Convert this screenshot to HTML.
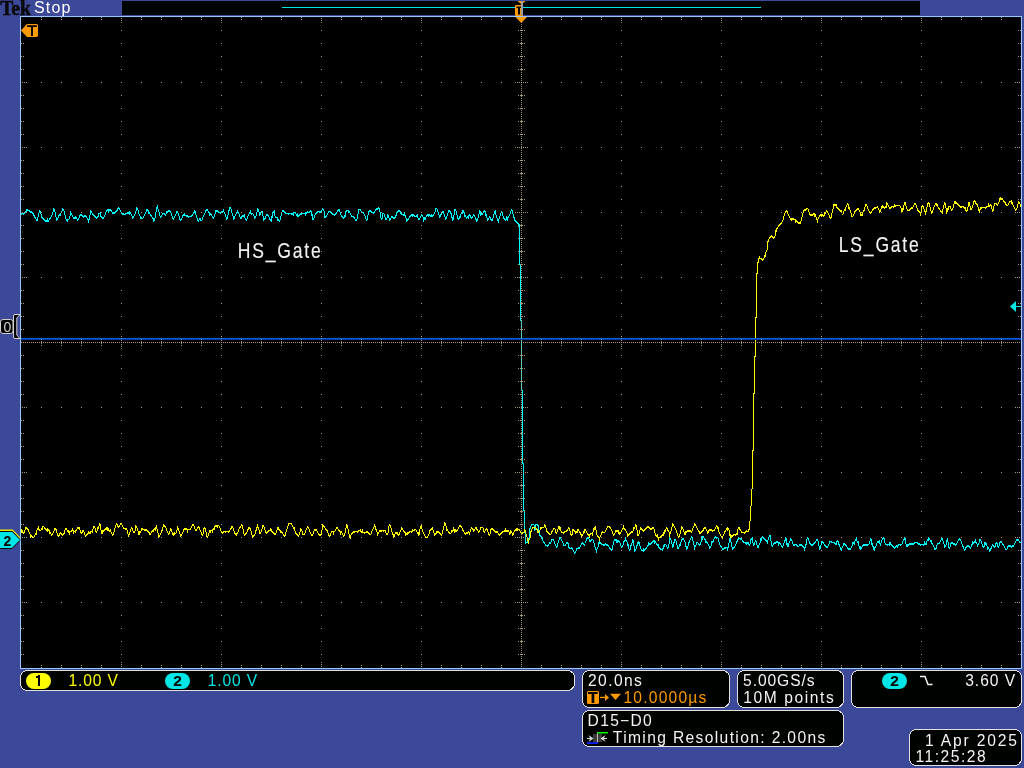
<!DOCTYPE html>
<html><head><meta charset="utf-8"><style>
html,body{margin:0;padding:0;background:#3c4898;width:1024px;height:768px;overflow:hidden}
svg{position:absolute;left:0;top:0;display:block;will-change:transform}
text{font-family:"Liberation Sans",sans-serif}
</style></head><body>
<svg width="1024" height="768" viewBox="0 0 1024 768">
<rect x="0" y="0" width="1024" height="768" fill="#3c4898"/>
<text x="0" y="0" transform="translate(0.16 14.8) scale(1 1.07)" font-weight="bold" font-size="19.5" fill="#0a0a0a" stroke="#0a0a0a" stroke-width="0.5" style="font-family:'Liberation Serif',serif">Tek</text>
<text x="34.0" y="13" font-size="16" fill="#ffffff" letter-spacing="1.141">Stop</text>
<rect x="122" y="1" width="798" height="14" fill="#000400"/>
<rect x="282" y="7" width="479" height="1" fill="#00e6e6"/>
<rect x="20.5" y="16.5" width="1001" height="652" fill="#000" stroke="#96c8ff" stroke-width="1"/>
<path d="M21 213h1v2h-1zM22 213h1v1h-1zM23 213h1v2h-1zM24 212h1v2h-1zM25 211h1v2h-1zM26 209h1v3h-1zM27 209h1v2h-1zM28 210h1v1h-1zM29 210h1v2h-1zM30 211h1v2h-1zM31 211h1v2h-1zM32 212h1v2h-1zM33 213h1v3h-1zM34 215h1v3h-1zM35 217h1v2h-1zM36 219h1v2h-1zM37 217h1v4h-1zM38 213h1v4h-1zM39 210h1v3h-1zM40 211h1v3h-1zM41 214h1v4h-1zM42 217h1v2h-1zM43 218h1v2h-1zM44 219h1v2h-1zM45 220h1v2h-1zM46 220h1v2h-1zM47 218h1v4h-1zM48 220h1v2h-1zM49 218h1v2h-1zM50 217h1v2h-1zM51 215h1v2h-1zM52 212h1v3h-1zM53 208h1v4h-1zM54 209h1v3h-1zM55 212h1v5h-1zM56 217h1v4h-1zM57 218h1v2h-1zM58 215h1v3h-1zM59 214h1v2h-1zM60 213h1v3h-1zM61 211h1v2h-1zM62 208h1v3h-1zM63 209h1v2h-1zM64 211h1v4h-1zM65 215h1v4h-1zM66 219h1v2h-1zM67 219h1v3h-1zM68 219h1v1h-1zM69 216h1v3h-1zM70 211h1v5h-1zM71 213h1v2h-1zM72 215h1v2h-1zM73 217h1v2h-1zM74 217h1v2h-1zM75 216h1v3h-1zM76 217h1v2h-1zM77 219h1v2h-1zM78 218h1v2h-1zM79 215h1v3h-1zM80 214h1v2h-1zM81 214h1v2h-1zM82 215h1v2h-1zM83 216h1v2h-1zM84 215h1v2h-1zM85 215h1v2h-1zM86 216h1v2h-1zM87 218h1v2h-1zM88 219h1v4h-1zM89 215h1v5h-1zM90 210h1v5h-1zM91 211h1v2h-1zM92 213h1v2h-1zM93 214h1v2h-1zM94 215h1v2h-1zM95 216h1v2h-1zM96 217h1v2h-1zM97 216h1v2h-1zM98 213h1v4h-1zM99 213h1v1h-1zM100 212h1v5h-1zM101 216h1v2h-1zM102 217h1v2h-1zM103 217h1v2h-1zM104 215h1v2h-1zM105 212h1v3h-1zM106 210h1v2h-1zM107 209h1v2h-1zM108 209h1v4h-1zM109 209h1v2h-1zM110 209h1v2h-1zM111 210h1v2h-1zM112 212h1v2h-1zM113 212h1v2h-1zM114 212h1v2h-1zM115 211h1v2h-1zM116 210h1v2h-1zM117 208h1v3h-1zM118 207h1v2h-1zM119 208h1v2h-1zM120 210h1v2h-1zM121 212h1v2h-1zM122 213h1v2h-1zM123 213h1v2h-1zM124 214h1v1h-1zM125 213h1v2h-1zM126 213h1v1h-1zM127 212h1v2h-1zM128 212h1v2h-1zM129 211h1v4h-1zM130 212h1v2h-1zM131 214h1v2h-1zM132 216h1v3h-1zM133 216h1v2h-1zM134 214h1v2h-1zM135 211h1v3h-1zM136 207h1v4h-1zM137 208h1v2h-1zM138 210h1v4h-1zM139 214h1v2h-1zM140 216h1v3h-1zM141 217h1v2h-1zM142 218h1v1h-1zM143 216h1v2h-1zM144 214h1v2h-1zM145 212h1v2h-1zM146 209h1v3h-1zM147 209h1v2h-1zM148 210h1v4h-1zM149 212h1v2h-1zM150 214h1v2h-1zM151 215h1v2h-1zM152 217h1v2h-1zM153 218h1v4h-1zM154 218h1v3h-1zM155 212h1v6h-1zM156 207h1v5h-1zM157 205h1v4h-1zM158 209h1v3h-1zM159 212h1v4h-1zM160 216h1v2h-1zM161 215h1v2h-1zM162 213h1v2h-1zM163 213h1v1h-1zM164 213h1v2h-1zM165 214h1v2h-1zM166 211h1v3h-1zM167 211h1v2h-1zM168 210h1v2h-1zM169 210h1v2h-1zM170 211h1v2h-1zM171 213h1v3h-1zM172 216h1v3h-1zM173 218h1v2h-1zM174 216h1v2h-1zM175 214h1v2h-1zM176 211h1v3h-1zM177 211h1v2h-1zM178 213h1v3h-1zM179 216h1v4h-1zM180 219h1v2h-1zM181 218h1v2h-1zM182 215h1v3h-1zM183 214h1v2h-1zM184 213h1v3h-1zM185 215h1v1h-1zM186 215h1v2h-1zM187 215h1v2h-1zM188 216h1v2h-1zM189 216h1v1h-1zM190 216h1v1h-1zM191 215h1v2h-1zM192 214h1v2h-1zM193 212h1v2h-1zM194 210h1v3h-1zM195 211h1v4h-1zM196 215h1v3h-1zM197 218h1v3h-1zM198 220h1v2h-1zM199 218h1v2h-1zM200 218h1v3h-1zM201 220h1v1h-1zM202 217h1v3h-1zM203 215h1v2h-1zM204 213h1v2h-1zM205 210h1v3h-1zM206 209h1v2h-1zM207 209h1v2h-1zM208 211h1v2h-1zM209 212h1v4h-1zM210 213h1v2h-1zM211 214h1v2h-1zM212 216h1v2h-1zM213 217h1v2h-1zM214 214h1v3h-1zM215 210h1v4h-1zM216 210h1v2h-1zM217 210h1v2h-1zM218 211h1v2h-1zM219 212h1v1h-1zM220 212h1v2h-1zM221 211h1v2h-1zM222 211h1v2h-1zM223 209h1v3h-1zM224 212h1v2h-1zM225 214h1v3h-1zM226 217h1v3h-1zM227 215h1v4h-1zM228 210h1v5h-1zM229 207h1v4h-1zM230 207h1v2h-1zM231 209h1v4h-1zM232 213h1v3h-1zM233 216h1v4h-1zM234 216h1v3h-1zM235 214h1v2h-1zM236 212h1v2h-1zM237 210h1v3h-1zM238 212h1v2h-1zM239 214h1v3h-1zM240 217h1v2h-1zM241 216h1v3h-1zM242 215h1v2h-1zM243 215h1v2h-1zM244 214h1v4h-1zM245 218h1v2h-1zM246 219h1v2h-1zM247 216h1v3h-1zM248 214h1v2h-1zM249 212h1v2h-1zM250 210h1v4h-1zM251 213h1v2h-1zM252 213h1v1h-1zM253 214h1v2h-1zM254 216h1v3h-1zM255 216h1v2h-1zM256 212h1v4h-1zM257 208h1v4h-1zM258 209h1v3h-1zM259 212h1v4h-1zM260 212h1v3h-1zM261 211h1v2h-1zM262 211h1v5h-1zM263 216h1v5h-1zM264 218h1v2h-1zM265 216h1v3h-1zM266 214h1v2h-1zM267 214h1v2h-1zM268 215h1v2h-1zM269 217h1v3h-1zM270 219h1v2h-1zM271 216h1v6h-1zM272 212h1v6h-1zM273 211h1v2h-1zM274 210h1v6h-1zM275 216h1v2h-1zM276 217h1v1h-1zM277 217h1v4h-1zM278 219h1v2h-1zM279 220h1v2h-1zM280 216h1v4h-1zM281 212h1v4h-1zM282 210h1v2h-1zM283 210h1v2h-1zM284 211h1v2h-1zM285 212h1v2h-1zM286 213h1v1h-1zM287 213h1v1h-1zM288 213h1v2h-1zM289 213h1v1h-1zM290 213h1v1h-1zM291 213h1v2h-1zM292 213h1v2h-1zM293 212h1v4h-1zM294 212h1v1h-1zM295 212h1v2h-1zM296 214h1v2h-1zM297 213h1v4h-1zM298 215h1v2h-1zM299 214h1v2h-1zM300 213h1v2h-1zM301 213h1v2h-1zM302 213h1v1h-1zM303 213h1v1h-1zM304 213h1v1h-1zM305 212h1v4h-1zM306 212h1v2h-1zM307 211h1v2h-1zM308 212h1v1h-1zM309 211h1v2h-1zM310 210h1v2h-1zM311 211h1v5h-1zM312 214h1v6h-1zM313 218h1v2h-1zM314 215h1v3h-1zM315 213h1v2h-1zM316 212h1v2h-1zM317 211h1v2h-1zM318 211h1v1h-1zM319 211h1v2h-1zM320 211h1v2h-1zM321 210h1v2h-1zM322 208h1v2h-1zM323 209h1v2h-1zM324 211h1v7h-1zM325 216h1v2h-1zM326 215h1v2h-1zM327 213h1v2h-1zM328 211h1v2h-1zM329 211h1v1h-1zM330 211h1v2h-1zM331 212h1v2h-1zM332 213h1v2h-1zM333 214h1v1h-1zM334 214h1v2h-1zM335 213h1v2h-1zM336 212h1v2h-1zM337 210h1v2h-1zM338 209h1v2h-1zM339 209h1v3h-1zM340 212h1v3h-1zM341 215h1v2h-1zM342 216h1v2h-1zM343 217h1v2h-1zM344 215h1v3h-1zM345 211h1v6h-1zM346 210h1v2h-1zM347 210h1v1h-1zM348 210h1v3h-1zM349 211h1v2h-1zM350 213h1v2h-1zM351 215h1v2h-1zM352 216h1v1h-1zM353 216h1v2h-1zM354 217h1v2h-1zM355 219h1v2h-1zM356 219h1v2h-1zM357 214h1v5h-1zM358 209h1v5h-1zM359 209h1v1h-1zM360 209h1v2h-1zM361 211h1v2h-1zM362 212h1v1h-1zM363 212h1v2h-1zM364 214h1v2h-1zM365 216h1v3h-1zM366 219h1v2h-1zM367 215h1v5h-1zM368 211h1v4h-1zM369 210h1v2h-1zM370 210h1v2h-1zM371 211h1v2h-1zM372 212h1v1h-1zM373 212h1v2h-1zM374 211h1v2h-1zM375 209h1v2h-1zM376 208h1v2h-1zM377 208h1v2h-1zM378 207h1v2h-1zM379 208h1v4h-1zM380 212h1v6h-1zM381 218h1v2h-1zM382 213h1v6h-1zM383 213h1v1h-1zM384 214h1v3h-1zM385 217h1v3h-1zM386 218h1v2h-1zM387 214h1v4h-1zM388 215h1v3h-1zM389 218h1v3h-1zM390 218h1v2h-1zM391 216h1v2h-1zM392 216h1v2h-1zM393 217h1v2h-1zM394 217h1v2h-1zM395 215h1v3h-1zM396 212h1v4h-1zM397 211h1v2h-1zM398 210h1v2h-1zM399 210h1v2h-1zM400 211h1v3h-1zM401 213h1v2h-1zM402 214h1v1h-1zM403 214h1v2h-1zM404 212h1v4h-1zM405 215h1v3h-1zM406 218h1v4h-1zM407 219h1v2h-1zM408 218h1v2h-1zM409 216h1v2h-1zM410 215h1v2h-1zM411 214h1v2h-1zM412 214h1v3h-1zM413 214h1v2h-1zM414 215h1v2h-1zM415 216h1v1h-1zM416 215h1v2h-1zM417 214h1v4h-1zM418 218h1v2h-1zM419 218h1v2h-1zM420 216h1v2h-1zM421 214h1v2h-1zM422 215h1v2h-1zM423 217h1v5h-1zM424 217h1v3h-1zM425 217h1v3h-1zM426 215h1v2h-1zM427 214h1v2h-1zM428 214h1v3h-1zM429 214h1v2h-1zM430 215h1v2h-1zM431 214h1v3h-1zM432 215h1v2h-1zM433 214h1v2h-1zM434 212h1v2h-1zM435 208h1v4h-1zM436 208h1v1h-1zM437 209h1v3h-1zM438 212h1v3h-1zM439 215h1v3h-1zM440 214h1v3h-1zM441 213h1v2h-1zM442 211h1v2h-1zM443 211h1v3h-1zM444 214h1v3h-1zM445 217h1v3h-1zM446 216h1v3h-1zM447 213h1v3h-1zM448 210h1v3h-1zM449 210h1v2h-1zM450 211h1v3h-1zM451 213h1v5h-1zM452 217h1v4h-1zM453 215h1v5h-1zM454 209h1v6h-1zM455 209h1v2h-1zM456 211h1v4h-1zM457 215h1v4h-1zM458 218h1v2h-1zM459 216h1v3h-1zM460 214h1v4h-1zM461 212h1v2h-1zM462 210h1v4h-1zM463 210h1v3h-1zM464 212h1v5h-1zM465 215h1v2h-1zM466 217h1v2h-1zM467 216h1v2h-1zM468 215h1v4h-1zM469 214h1v2h-1zM470 215h1v3h-1zM471 217h1v2h-1zM472 216h1v2h-1zM473 214h1v2h-1zM474 215h1v2h-1zM475 217h1v3h-1zM476 219h1v3h-1zM477 218h1v3h-1zM478 214h1v4h-1zM479 210h1v4h-1zM480 211h1v5h-1zM481 213h1v2h-1zM482 213h1v2h-1zM483 211h1v2h-1zM484 210h1v2h-1zM485 211h1v5h-1zM486 214h1v4h-1zM487 218h1v3h-1zM488 218h1v2h-1zM489 216h1v2h-1zM490 217h1v3h-1zM491 219h1v2h-1zM492 218h1v3h-1zM493 214h1v4h-1zM494 211h1v3h-1zM495 210h1v5h-1zM496 215h1v3h-1zM497 218h1v3h-1zM498 219h1v4h-1zM499 216h1v3h-1zM500 213h1v3h-1zM501 211h1v2h-1zM502 212h1v4h-1zM503 216h1v3h-1zM504 218h1v2h-1zM505 219h1v2h-1zM506 216h1v4h-1zM507 217h1v4h-1zM508 216h1v2h-1zM509 214h1v2h-1zM510 211h1v3h-1zM511 209h1v2h-1zM512 210h1v3h-1zM512 212h1v2h-1zM513 214h1v4h-1zM514 217h1v4h-1zM515 220h1v2h-1zM516 221h1v2h-1zM517 222h1v2h-1zM518 223h1v4h-1zM519 227h1v4h-1zM519 224h1v41h-1zM520 264h1v57h-1zM521 321h1v70h-1zM522 390h1v74h-1zM523 463h1v48h-1zM524 510h1v23h-1zM525 532h1v12h-1zM526 542h1v1h-1zM527 540h1v3h-1zM528 538h1v4h-1zM529 528h1v12h-1zM530 526h1v3h-1zM531 524h1v2h-1zM532 524h1v1h-1zM533 524h1v1h-1zM534 525h1v6h-1zM535 524h1v6h-1zM536 524h1v1h-1zM537 524h1v2h-1zM538 525h1v6h-1zM539 531h1v5h-1zM540 535h1v2h-1zM541 536h1v3h-1zM542 537h1v4h-1zM543 541h1v2h-1zM544 542h1v2h-1zM545 544h1v2h-1zM546 545h1v1h-1zM547 545h1v2h-1zM548 544h1v2h-1zM549 542h1v2h-1zM550 542h1v2h-1zM551 539h1v3h-1zM552 539h1v1h-1zM553 539h1v2h-1zM554 541h1v3h-1zM555 544h1v2h-1zM556 546h1v2h-1zM557 543h1v4h-1zM558 540h1v3h-1zM559 537h1v3h-1zM560 537h1v2h-1zM561 539h1v2h-1zM562 541h1v2h-1zM563 543h1v3h-1zM564 545h1v1h-1zM565 544h1v2h-1zM566 542h1v2h-1zM567 542h1v2h-1zM568 543h1v5h-1zM569 547h1v2h-1zM570 548h1v1h-1zM571 547h1v2h-1zM572 548h1v2h-1zM573 550h1v2h-1zM574 552h1v2h-1zM575 551h1v2h-1zM576 548h1v3h-1zM577 548h1v1h-1zM578 547h1v2h-1zM579 547h1v2h-1zM580 545h1v2h-1zM581 543h1v2h-1zM582 542h1v2h-1zM583 543h1v2h-1zM584 544h1v2h-1zM585 541h1v2h-1zM586 538h1v3h-1zM587 537h1v2h-1zM588 537h1v2h-1zM589 539h1v3h-1zM590 540h1v2h-1zM591 539h1v2h-1zM592 539h1v1h-1zM593 540h1v3h-1zM594 543h1v4h-1zM595 547h1v3h-1zM596 549h1v4h-1zM597 547h1v2h-1zM598 542h1v5h-1zM599 540h1v4h-1zM600 542h1v2h-1zM601 543h1v2h-1zM602 544h1v1h-1zM603 544h1v2h-1zM604 544h1v2h-1zM605 543h1v2h-1zM606 544h1v2h-1zM607 544h1v2h-1zM608 545h1v2h-1zM609 547h1v2h-1zM610 548h1v2h-1zM611 549h1v2h-1zM612 545h1v5h-1zM613 541h1v4h-1zM614 539h1v2h-1zM615 539h1v2h-1zM616 539h1v4h-1zM617 540h1v3h-1zM618 540h1v2h-1zM619 541h1v2h-1zM620 543h1v3h-1zM621 546h1v2h-1zM622 545h1v2h-1zM623 541h1v4h-1zM624 540h1v2h-1zM625 537h1v4h-1zM626 540h1v2h-1zM627 542h1v4h-1zM628 544h1v5h-1zM629 549h1v2h-1zM630 545h1v5h-1zM631 543h1v3h-1zM632 539h1v4h-1zM633 540h1v6h-1zM634 546h1v6h-1zM635 549h1v2h-1zM636 545h1v4h-1zM637 542h1v4h-1zM638 541h1v3h-1zM639 542h1v4h-1zM640 546h1v3h-1zM641 549h1v2h-1zM642 550h1v1h-1zM643 548h1v4h-1zM644 549h1v2h-1zM645 548h1v2h-1zM646 547h1v2h-1zM647 545h1v2h-1zM648 542h1v4h-1zM649 543h1v2h-1zM650 543h1v2h-1zM651 542h1v2h-1zM652 541h1v2h-1zM653 540h1v2h-1zM654 540h1v4h-1zM655 541h1v2h-1zM656 543h1v2h-1zM657 544h1v2h-1zM658 544h1v4h-1zM659 547h1v2h-1zM660 548h1v2h-1zM661 549h1v1h-1zM662 548h1v3h-1zM663 545h1v4h-1zM664 544h1v3h-1zM665 544h1v1h-1zM666 545h1v2h-1zM667 547h1v2h-1zM668 544h1v4h-1zM669 537h1v7h-1zM670 538h1v2h-1zM671 540h1v4h-1zM672 544h1v4h-1zM673 542h1v5h-1zM674 539h1v4h-1zM675 539h1v2h-1zM676 541h1v4h-1zM677 545h1v4h-1zM678 547h1v2h-1zM679 544h1v3h-1zM680 542h1v4h-1zM681 539h1v3h-1zM682 538h1v2h-1zM683 538h1v2h-1zM684 540h1v2h-1zM685 542h1v5h-1zM686 546h1v4h-1zM687 546h1v3h-1zM688 542h1v4h-1zM689 540h1v3h-1zM690 538h1v2h-1zM691 536h1v2h-1zM692 537h1v4h-1zM693 541h1v4h-1zM694 545h1v5h-1zM695 545h1v2h-1zM696 542h1v3h-1zM697 542h1v1h-1zM698 543h1v2h-1zM699 544h1v2h-1zM700 542h1v3h-1zM701 536h1v6h-1zM702 536h1v4h-1zM703 536h1v2h-1zM704 538h1v2h-1zM705 539h1v4h-1zM706 541h1v2h-1zM707 542h1v2h-1zM708 544h1v2h-1zM709 546h1v3h-1zM710 546h1v2h-1zM711 541h1v5h-1zM712 541h1v2h-1zM713 539h1v3h-1zM714 537h1v2h-1zM715 536h1v2h-1zM716 537h1v2h-1zM717 537h1v1h-1zM718 538h1v4h-1zM719 542h1v3h-1zM720 545h1v2h-1zM721 546h1v2h-1zM722 548h1v2h-1zM723 548h1v2h-1zM724 547h1v2h-1zM725 547h1v2h-1zM726 547h1v1h-1zM727 547h1v4h-1zM728 543h1v5h-1zM729 538h1v5h-1zM730 537h1v5h-1zM731 542h1v5h-1zM732 547h1v3h-1zM733 547h1v2h-1zM734 546h1v2h-1zM735 544h1v2h-1zM736 541h1v3h-1zM737 539h1v3h-1zM738 537h1v3h-1zM739 538h1v1h-1zM740 538h1v2h-1zM741 538h1v2h-1zM742 540h1v2h-1zM743 541h1v2h-1zM744 542h1v1h-1zM745 542h1v2h-1zM746 542h1v3h-1zM747 542h1v2h-1zM748 542h1v3h-1zM749 544h1v2h-1zM750 539h1v5h-1zM751 538h1v2h-1zM752 537h1v6h-1zM753 543h1v3h-1zM754 542h1v3h-1zM755 540h1v2h-1zM756 541h1v4h-1zM757 545h1v3h-1zM758 545h1v3h-1zM759 543h1v2h-1zM760 538h1v5h-1zM761 538h1v3h-1zM762 536h1v2h-1zM763 537h1v2h-1zM764 538h1v2h-1zM765 539h1v2h-1zM766 540h1v2h-1zM767 540h1v4h-1zM768 537h1v3h-1zM769 535h1v2h-1zM770 535h1v6h-1zM771 541h1v5h-1zM772 545h1v2h-1zM773 543h1v2h-1zM774 542h1v2h-1zM775 542h1v2h-1zM776 541h1v2h-1zM777 541h1v2h-1zM778 542h1v4h-1zM779 542h1v2h-1zM780 543h1v2h-1zM781 545h1v2h-1zM782 546h1v2h-1zM783 543h1v3h-1zM784 540h1v3h-1zM785 537h1v4h-1zM786 538h1v7h-1zM787 543h1v4h-1zM788 543h1v4h-1zM789 541h1v2h-1zM790 538h1v3h-1zM791 539h1v2h-1zM792 541h1v3h-1zM793 544h1v2h-1zM794 544h1v2h-1zM795 544h1v1h-1zM796 544h1v2h-1zM797 545h1v2h-1zM798 546h1v1h-1zM799 544h1v2h-1zM800 544h1v2h-1zM801 544h1v2h-1zM802 545h1v2h-1zM803 546h1v2h-1zM804 547h1v4h-1zM805 544h1v4h-1zM806 539h1v6h-1zM807 537h1v2h-1zM808 538h1v3h-1zM809 541h1v3h-1zM810 543h1v2h-1zM811 544h1v2h-1zM812 544h1v2h-1zM813 543h1v2h-1zM814 542h1v2h-1zM815 541h1v2h-1zM816 539h1v2h-1zM817 539h1v2h-1zM818 541h1v5h-1zM819 546h1v4h-1zM820 545h1v4h-1zM821 541h1v4h-1zM822 541h1v2h-1zM823 542h1v2h-1zM824 544h1v2h-1zM825 545h1v2h-1zM826 546h1v2h-1zM827 546h1v2h-1zM828 544h1v2h-1zM829 541h1v3h-1zM830 541h1v1h-1zM831 541h1v2h-1zM832 542h1v1h-1zM833 542h1v1h-1zM834 542h1v2h-1zM835 543h1v2h-1zM836 541h1v4h-1zM837 540h1v2h-1zM838 541h1v4h-1zM839 544h1v3h-1zM840 547h1v3h-1zM841 548h1v3h-1zM842 546h1v2h-1zM843 543h1v3h-1zM844 543h1v2h-1zM845 544h1v2h-1zM846 545h1v2h-1zM847 547h1v2h-1zM848 548h1v2h-1zM849 548h1v2h-1zM850 548h1v2h-1zM851 546h1v2h-1zM852 542h1v4h-1zM853 542h1v2h-1zM854 541h1v4h-1zM855 539h1v2h-1zM856 537h1v4h-1zM857 541h1v2h-1zM858 541h1v5h-1zM859 546h1v3h-1zM860 546h1v4h-1zM861 547h1v2h-1zM862 545h1v2h-1zM863 544h1v2h-1zM864 544h1v2h-1zM865 544h1v2h-1zM866 544h1v2h-1zM867 544h1v2h-1zM868 544h1v1h-1zM869 541h1v3h-1zM870 538h1v3h-1zM871 539h1v6h-1zM872 543h1v4h-1zM873 546h1v4h-1zM874 547h1v4h-1zM875 546h1v2h-1zM876 543h1v3h-1zM877 541h1v2h-1zM878 541h1v2h-1zM879 540h1v4h-1zM880 543h1v3h-1zM881 540h1v3h-1zM882 538h1v2h-1zM883 537h1v2h-1zM884 538h1v5h-1zM885 543h1v2h-1zM886 544h1v1h-1zM887 544h1v2h-1zM888 544h1v1h-1zM889 542h1v4h-1zM890 542h1v3h-1zM891 544h1v2h-1zM892 545h1v2h-1zM893 546h1v2h-1zM894 547h1v2h-1zM895 546h1v2h-1zM896 545h1v2h-1zM897 545h1v3h-1zM898 544h1v2h-1zM899 544h1v1h-1zM900 544h1v2h-1zM901 544h1v1h-1zM902 541h1v3h-1zM903 539h1v2h-1zM904 537h1v3h-1zM905 538h1v6h-1zM906 544h1v3h-1zM907 544h1v3h-1zM908 544h1v2h-1zM909 543h1v2h-1zM910 543h1v2h-1zM911 543h1v2h-1zM912 543h1v2h-1zM913 543h1v2h-1zM914 542h1v2h-1zM915 542h1v1h-1zM916 542h1v1h-1zM917 542h1v2h-1zM918 543h1v2h-1zM919 543h1v2h-1zM920 544h1v2h-1zM921 544h1v1h-1zM922 544h1v1h-1zM923 544h1v2h-1zM924 541h1v4h-1zM925 543h1v2h-1zM926 541h1v4h-1zM927 539h1v2h-1zM928 537h1v4h-1zM929 538h1v2h-1zM930 540h1v2h-1zM931 540h1v4h-1zM932 543h1v2h-1zM933 545h1v2h-1zM934 547h1v3h-1zM935 548h1v2h-1zM936 545h1v4h-1zM937 543h1v2h-1zM938 543h1v1h-1zM939 542h1v2h-1zM940 540h1v2h-1zM941 538h1v2h-1zM942 538h1v3h-1zM943 541h1v3h-1zM944 544h1v4h-1zM945 545h1v2h-1zM946 540h1v5h-1zM947 538h1v4h-1zM948 542h1v6h-1zM949 547h1v2h-1zM950 543h1v4h-1zM951 542h1v2h-1zM952 542h1v2h-1zM953 543h1v2h-1zM954 543h1v2h-1zM955 544h1v2h-1zM956 543h1v2h-1zM957 541h1v2h-1zM958 539h1v2h-1zM959 538h1v2h-1zM960 539h1v2h-1zM961 541h1v3h-1zM962 544h1v3h-1zM963 546h1v3h-1zM964 549h1v2h-1zM965 547h1v3h-1zM966 546h1v2h-1zM967 545h1v2h-1zM968 545h1v2h-1zM969 546h1v2h-1zM970 547h1v2h-1zM971 544h1v3h-1zM972 541h1v4h-1zM973 542h1v2h-1zM974 541h1v2h-1zM975 539h1v4h-1zM976 542h1v2h-1zM977 544h1v3h-1zM978 543h1v2h-1zM979 539h1v4h-1zM980 539h1v2h-1zM981 541h1v3h-1zM982 544h1v3h-1zM983 546h1v2h-1zM984 542h1v5h-1zM985 542h1v3h-1zM986 543h1v3h-1zM987 546h1v4h-1zM988 547h1v2h-1zM989 549h1v3h-1zM990 548h1v3h-1zM991 546h1v3h-1zM992 544h1v2h-1zM993 545h1v2h-1zM994 546h1v2h-1zM995 543h1v4h-1zM996 542h1v2h-1zM997 543h1v4h-1zM998 546h1v2h-1zM999 542h1v4h-1zM1000 541h1v2h-1zM1001 541h1v2h-1zM1002 543h1v2h-1zM1003 544h1v2h-1zM1004 546h1v2h-1zM1005 548h1v2h-1zM1006 549h1v1h-1zM1007 546h1v3h-1zM1008 545h1v2h-1zM1009 545h1v2h-1zM1010 545h1v2h-1zM1011 546h1v2h-1zM1012 545h1v2h-1zM1013 545h1v2h-1zM1014 543h1v2h-1zM1015 541h1v2h-1zM1016 539h1v2h-1zM1017 539h1v2h-1zM1018 539h1v2h-1zM1019 541h1v2h-1zM1020 542h1v1h-1z" fill="#00fafa" shape-rendering="crispEdges"/>
<path d="M21 529h1v4h-1zM22 530h1v3h-1zM23 532h1v2h-1zM24 530h1v3h-1zM25 527h1v3h-1zM26 527h1v2h-1zM27 528h1v2h-1zM28 529h1v3h-1zM29 532h1v2h-1zM30 534h1v4h-1zM31 535h1v2h-1zM32 536h1v2h-1zM33 537h1v1h-1zM34 535h1v2h-1zM35 533h1v2h-1zM36 530h1v5h-1zM37 528h1v2h-1zM38 526h1v4h-1zM39 529h1v2h-1zM40 530h1v1h-1zM41 528h1v2h-1zM42 526h1v4h-1zM43 526h1v1h-1zM44 527h1v2h-1zM45 528h1v2h-1zM46 529h1v2h-1zM47 528h1v4h-1zM48 529h1v2h-1zM49 530h1v4h-1zM50 532h1v2h-1zM51 534h1v2h-1zM52 533h1v2h-1zM53 531h1v2h-1zM54 528h1v3h-1zM55 528h1v2h-1zM56 529h1v4h-1zM57 533h1v3h-1zM58 535h1v2h-1zM59 533h1v3h-1zM60 532h1v2h-1zM61 533h1v2h-1zM62 534h1v2h-1zM63 533h1v2h-1zM64 530h1v4h-1zM65 528h1v2h-1zM66 528h1v2h-1zM67 530h1v2h-1zM68 530h1v3h-1zM69 531h1v4h-1zM70 531h1v1h-1zM71 530h1v2h-1zM72 528h1v3h-1zM73 530h1v4h-1zM74 531h1v1h-1zM75 530h1v3h-1zM76 529h1v2h-1zM77 527h1v2h-1zM78 527h1v2h-1zM79 527h1v3h-1zM80 530h1v3h-1zM81 532h1v2h-1zM82 530h1v3h-1zM83 530h1v2h-1zM84 532h1v3h-1zM85 535h1v2h-1zM86 534h1v2h-1zM87 533h1v2h-1zM88 531h1v3h-1zM89 532h1v2h-1zM90 531h1v3h-1zM91 531h1v1h-1zM92 529h1v4h-1zM93 526h1v3h-1zM94 526h1v2h-1zM95 528h1v4h-1zM96 531h1v2h-1zM97 527h1v4h-1zM98 526h1v3h-1zM99 523h1v3h-1zM100 524h1v6h-1zM101 530h1v4h-1zM102 530h1v4h-1zM103 530h1v2h-1zM104 529h1v2h-1zM105 528h1v2h-1zM106 527h1v3h-1zM107 527h1v4h-1zM108 528h1v3h-1zM109 530h1v2h-1zM110 529h1v3h-1zM111 532h1v2h-1zM112 534h1v2h-1zM113 532h1v3h-1zM114 528h1v4h-1zM115 525h1v3h-1zM116 523h1v2h-1zM117 524h1v3h-1zM118 526h1v2h-1zM119 525h1v2h-1zM120 523h1v2h-1zM121 523h1v2h-1zM122 525h1v2h-1zM123 527h1v2h-1zM124 528h1v1h-1zM125 528h1v2h-1zM126 528h1v2h-1zM127 530h1v4h-1zM128 534h1v3h-1zM129 532h1v3h-1zM130 529h1v3h-1zM131 527h1v2h-1zM132 528h1v3h-1zM133 531h1v2h-1zM134 531h1v2h-1zM135 525h1v6h-1zM136 526h1v2h-1zM137 528h1v3h-1zM138 531h1v4h-1zM139 531h1v4h-1zM140 531h1v2h-1zM141 528h1v3h-1zM142 528h1v2h-1zM143 529h1v1h-1zM144 529h1v2h-1zM145 529h1v2h-1zM146 529h1v2h-1zM147 530h1v2h-1zM148 531h1v2h-1zM149 532h1v3h-1zM150 533h1v2h-1zM151 531h1v2h-1zM152 530h1v2h-1zM153 529h1v3h-1zM154 528h1v2h-1zM155 527h1v4h-1zM156 525h1v4h-1zM157 529h1v4h-1zM158 533h1v5h-1zM159 535h1v2h-1zM160 533h1v2h-1zM161 530h1v3h-1zM162 527h1v4h-1zM163 524h1v3h-1zM164 525h1v2h-1zM165 526h1v2h-1zM166 528h1v3h-1zM167 531h1v2h-1zM168 533h1v2h-1zM169 531h1v3h-1zM170 528h1v3h-1zM171 529h1v3h-1zM172 532h1v3h-1zM173 533h1v3h-1zM174 532h1v3h-1zM175 533h1v1h-1zM176 530h1v3h-1zM177 526h1v4h-1zM178 528h1v3h-1zM179 531h1v3h-1zM180 534h1v3h-1zM181 534h1v2h-1zM182 532h1v2h-1zM183 529h1v3h-1zM184 528h1v2h-1zM185 528h1v2h-1zM186 528h1v2h-1zM187 529h1v4h-1zM188 529h1v1h-1zM189 529h1v1h-1zM190 528h1v2h-1zM191 526h1v2h-1zM192 524h1v2h-1zM193 524h1v2h-1zM194 526h1v3h-1zM195 529h1v2h-1zM196 529h1v2h-1zM197 527h1v2h-1zM198 526h1v2h-1zM199 527h1v3h-1zM200 530h1v2h-1zM201 532h1v3h-1zM202 534h1v2h-1zM203 528h1v6h-1zM204 527h1v2h-1zM205 528h1v4h-1zM206 532h1v5h-1zM207 536h1v2h-1zM208 533h1v3h-1zM209 530h1v3h-1zM210 530h1v3h-1zM211 530h1v1h-1zM212 529h1v4h-1zM213 528h1v2h-1zM214 526h1v4h-1zM215 525h1v2h-1zM216 525h1v2h-1zM217 525h1v3h-1zM218 525h1v1h-1zM219 526h1v2h-1zM220 528h1v3h-1zM221 531h1v2h-1zM222 532h1v2h-1zM223 531h1v2h-1zM224 531h1v1h-1zM225 531h1v2h-1zM226 531h1v1h-1zM227 531h1v1h-1zM228 531h1v2h-1zM229 530h1v2h-1zM230 528h1v2h-1zM231 526h1v3h-1zM232 526h1v2h-1zM233 528h1v3h-1zM234 531h1v3h-1zM235 533h1v2h-1zM236 533h1v3h-1zM237 532h1v2h-1zM238 529h1v3h-1zM239 527h1v2h-1zM240 526h1v2h-1zM241 524h1v2h-1zM242 525h1v4h-1zM243 529h1v5h-1zM244 534h1v2h-1zM245 533h1v2h-1zM246 532h1v2h-1zM247 529h1v3h-1zM248 527h1v3h-1zM249 527h1v2h-1zM250 528h1v3h-1zM251 531h1v4h-1zM252 535h1v3h-1zM253 535h1v2h-1zM254 534h1v2h-1zM255 530h1v4h-1zM256 527h1v4h-1zM257 524h1v4h-1zM258 527h1v3h-1zM259 530h1v4h-1zM260 532h1v2h-1zM261 529h1v3h-1zM262 525h1v4h-1zM263 525h1v2h-1zM264 527h1v3h-1zM265 530h1v3h-1zM266 532h1v2h-1zM267 531h1v2h-1zM268 530h1v2h-1zM269 530h1v1h-1zM270 528h1v3h-1zM271 529h1v3h-1zM272 531h1v2h-1zM273 532h1v2h-1zM274 533h1v2h-1zM275 533h1v2h-1zM276 530h1v3h-1zM277 527h1v3h-1zM278 527h1v3h-1zM279 529h1v2h-1zM280 530h1v3h-1zM281 531h1v2h-1zM282 532h1v2h-1zM283 534h1v2h-1zM284 535h1v2h-1zM285 532h1v4h-1zM286 529h1v3h-1zM287 526h1v3h-1zM288 523h1v3h-1zM289 523h1v1h-1zM290 523h1v1h-1zM291 523h1v2h-1zM292 525h1v2h-1zM293 527h1v2h-1zM294 527h1v4h-1zM295 531h1v3h-1zM296 533h1v2h-1zM297 534h1v2h-1zM298 535h1v2h-1zM299 532h1v3h-1zM300 528h1v4h-1zM301 529h1v2h-1zM302 531h1v4h-1zM303 534h1v1h-1zM304 533h1v2h-1zM305 530h1v3h-1zM306 528h1v2h-1zM307 526h1v2h-1zM308 527h1v2h-1zM309 529h1v3h-1zM310 532h1v2h-1zM311 534h1v2h-1zM312 534h1v2h-1zM313 531h1v3h-1zM314 529h1v2h-1zM315 529h1v2h-1zM316 529h1v2h-1zM317 531h1v2h-1zM318 533h1v2h-1zM319 534h1v2h-1zM320 534h1v2h-1zM321 530h1v5h-1zM322 524h1v6h-1zM323 525h1v2h-1zM324 526h1v2h-1zM325 528h1v2h-1zM326 529h1v2h-1zM327 530h1v3h-1zM328 533h1v3h-1zM329 535h1v2h-1zM330 533h1v3h-1zM331 531h1v2h-1zM332 531h1v1h-1zM333 531h1v4h-1zM334 531h1v1h-1zM335 529h1v2h-1zM336 527h1v2h-1zM337 527h1v2h-1zM338 529h1v2h-1zM339 530h1v2h-1zM340 531h1v4h-1zM341 531h1v2h-1zM342 533h1v2h-1zM343 535h1v2h-1zM344 533h1v3h-1zM345 528h1v5h-1zM346 524h1v4h-1zM347 525h1v4h-1zM348 529h1v5h-1zM349 534h1v4h-1zM350 535h1v4h-1zM351 533h1v2h-1zM352 532h1v2h-1zM353 531h1v2h-1zM354 531h1v2h-1zM355 531h1v1h-1zM356 531h1v1h-1zM357 531h1v2h-1zM358 530h1v2h-1zM359 530h1v1h-1zM360 529h1v3h-1zM361 531h1v2h-1zM362 529h1v4h-1zM363 532h1v1h-1zM364 532h1v2h-1zM365 532h1v1h-1zM366 531h1v2h-1zM367 531h1v2h-1zM368 532h1v2h-1zM369 533h1v2h-1zM370 534h1v1h-1zM371 531h1v3h-1zM372 529h1v2h-1zM373 527h1v2h-1zM374 524h1v3h-1zM375 526h1v4h-1zM376 529h1v3h-1zM377 532h1v4h-1zM378 532h1v2h-1zM379 530h1v2h-1zM380 530h1v2h-1zM381 530h1v2h-1zM382 530h1v1h-1zM383 530h1v2h-1zM384 530h1v1h-1zM385 530h1v3h-1zM386 533h1v2h-1zM387 533h1v2h-1zM388 526h1v7h-1zM389 524h1v2h-1zM390 525h1v3h-1zM391 528h1v4h-1zM392 532h1v3h-1zM393 534h1v4h-1zM394 534h1v3h-1zM395 532h1v2h-1zM396 532h1v2h-1zM397 532h1v3h-1zM398 534h1v2h-1zM399 532h1v3h-1zM400 530h1v2h-1zM401 527h1v3h-1zM402 528h1v2h-1zM403 530h1v2h-1zM404 531h1v2h-1zM405 532h1v4h-1zM406 533h1v2h-1zM407 532h1v3h-1zM408 532h1v2h-1zM409 531h1v2h-1zM410 531h1v1h-1zM411 531h1v2h-1zM412 529h1v3h-1zM413 530h1v1h-1zM414 529h1v2h-1zM415 529h1v1h-1zM416 530h1v2h-1zM417 532h1v2h-1zM418 532h1v4h-1zM419 529h1v6h-1zM420 526h1v3h-1zM421 525h1v4h-1zM422 529h1v3h-1zM423 532h1v2h-1zM424 534h1v2h-1zM425 536h1v2h-1zM426 537h1v1h-1zM427 536h1v2h-1zM428 534h1v2h-1zM429 530h1v4h-1zM430 529h1v2h-1zM431 528h1v2h-1zM432 527h1v3h-1zM433 530h1v3h-1zM434 533h1v3h-1zM435 533h1v2h-1zM436 531h1v3h-1zM437 531h1v2h-1zM438 531h1v2h-1zM439 532h1v2h-1zM440 533h1v2h-1zM441 534h1v2h-1zM442 530h1v4h-1zM443 526h1v4h-1zM444 522h1v4h-1zM445 523h1v3h-1zM446 526h1v5h-1zM447 529h1v2h-1zM448 531h1v2h-1zM449 532h1v2h-1zM450 533h1v1h-1zM451 530h1v3h-1zM452 530h1v2h-1zM453 527h1v4h-1zM454 529h1v4h-1zM455 529h1v3h-1zM456 530h1v2h-1zM457 529h1v2h-1zM458 527h1v2h-1zM459 525h1v2h-1zM460 525h1v2h-1zM461 526h1v2h-1zM462 528h1v3h-1zM463 530h1v2h-1zM464 532h1v2h-1zM465 533h1v2h-1zM466 532h1v2h-1zM467 532h1v2h-1zM468 531h1v2h-1zM469 532h1v3h-1zM470 529h1v3h-1zM471 527h1v2h-1zM472 528h1v2h-1zM473 529h1v3h-1zM474 529h1v2h-1zM475 527h1v2h-1zM476 527h1v3h-1zM477 529h1v2h-1zM478 531h1v2h-1zM479 530h1v2h-1zM480 527h1v3h-1zM481 527h1v1h-1zM482 527h1v1h-1zM483 528h1v4h-1zM484 531h1v2h-1zM485 529h1v2h-1zM486 528h1v2h-1zM487 529h1v3h-1zM488 532h1v3h-1zM489 534h1v2h-1zM490 529h1v5h-1zM491 528h1v2h-1zM492 528h1v2h-1zM493 529h1v2h-1zM494 530h1v2h-1zM495 531h1v2h-1zM496 531h1v2h-1zM497 531h1v2h-1zM498 533h1v2h-1zM499 534h1v2h-1zM500 533h1v2h-1zM501 532h1v2h-1zM502 531h1v2h-1zM503 531h1v1h-1zM504 530h1v2h-1zM505 528h1v4h-1zM506 530h1v2h-1zM507 530h1v2h-1zM508 530h1v2h-1zM509 532h1v3h-1zM510 530h1v4h-1zM511 531h1v2h-1zM512 533h1v3h-1zM513 532h1v3h-1zM514 530h1v2h-1zM515 529h1v2h-1zM516 528h1v3h-1zM517 528h1v3h-1zM518 529h1v1h-1zM519 529h1v2h-1zM520 531h1v2h-1zM521 532h1v2h-1zM522 532h1v2h-1zM523 532h1v1h-1zM524 529h1v3h-1zM525 530h1v4h-1zM526 534h1v3h-1zM527 537h1v4h-1zM528 540h1v4h-1zM529 538h1v2h-1zM530 531h1v7h-1zM531 529h1v3h-1zM532 527h1v2h-1zM533 527h1v1h-1zM534 527h1v2h-1zM535 527h1v1h-1zM536 528h1v2h-1zM537 529h1v4h-1zM538 531h1v2h-1zM539 530h1v2h-1zM540 527h1v3h-1zM541 527h1v2h-1zM542 527h1v1h-1zM543 527h1v1h-1zM544 524h1v3h-1zM545 525h1v3h-1zM546 528h1v4h-1zM547 531h1v2h-1zM548 532h1v2h-1zM549 533h1v2h-1zM550 534h1v1h-1zM551 531h1v3h-1zM552 530h1v2h-1zM553 528h1v2h-1zM554 528h1v1h-1zM555 529h1v4h-1zM556 532h1v2h-1zM557 529h1v3h-1zM558 526h1v3h-1zM559 526h1v4h-1zM560 527h1v4h-1zM561 531h1v2h-1zM562 532h1v1h-1zM563 532h1v2h-1zM564 531h1v2h-1zM565 531h1v1h-1zM566 530h1v2h-1zM567 529h1v2h-1zM568 527h1v2h-1zM569 528h1v3h-1zM570 531h1v4h-1zM571 534h1v2h-1zM572 529h1v6h-1zM573 529h1v2h-1zM574 530h1v2h-1zM575 531h1v3h-1zM576 531h1v2h-1zM577 529h1v4h-1zM578 529h1v2h-1zM579 531h1v2h-1zM580 532h1v3h-1zM581 534h1v3h-1zM582 534h1v2h-1zM583 531h1v3h-1zM584 529h1v4h-1zM585 529h1v2h-1zM586 531h1v2h-1zM587 533h1v2h-1zM588 534h1v2h-1zM589 534h1v4h-1zM590 533h1v2h-1zM591 533h1v1h-1zM592 532h1v4h-1zM593 528h1v4h-1zM594 527h1v3h-1zM595 526h1v4h-1zM596 530h1v5h-1zM597 535h1v2h-1zM598 536h1v2h-1zM599 537h1v4h-1zM600 535h1v2h-1zM601 532h1v3h-1zM602 531h1v2h-1zM603 532h1v1h-1zM604 532h1v1h-1zM605 530h1v2h-1zM606 528h1v2h-1zM607 526h1v2h-1zM608 526h1v1h-1zM609 526h1v2h-1zM610 527h1v2h-1zM611 529h1v2h-1zM612 531h1v3h-1zM613 534h1v2h-1zM614 533h1v2h-1zM615 530h1v3h-1zM616 530h1v2h-1zM617 530h1v2h-1zM618 530h1v4h-1zM619 532h1v3h-1zM620 532h1v2h-1zM621 530h1v2h-1zM622 528h1v2h-1zM623 525h1v4h-1zM624 528h1v2h-1zM625 529h1v2h-1zM626 531h1v2h-1zM627 533h1v4h-1zM628 534h1v2h-1zM629 533h1v2h-1zM630 532h1v2h-1zM631 531h1v2h-1zM632 531h1v2h-1zM633 527h1v4h-1zM634 527h1v2h-1zM635 524h1v3h-1zM636 525h1v5h-1zM637 530h1v6h-1zM638 534h1v2h-1zM639 530h1v4h-1zM640 527h1v3h-1zM641 528h1v2h-1zM642 529h1v2h-1zM643 530h1v2h-1zM644 529h1v2h-1zM645 528h1v2h-1zM646 527h1v2h-1zM647 526h1v2h-1zM648 526h1v2h-1zM649 527h1v2h-1zM650 528h1v2h-1zM651 528h1v2h-1zM652 527h1v2h-1zM653 527h1v2h-1zM654 529h1v4h-1zM655 533h1v3h-1zM656 535h1v2h-1zM657 534h1v4h-1zM658 537h1v4h-1zM659 537h1v1h-1zM660 536h1v2h-1zM661 535h1v2h-1zM662 534h1v2h-1zM663 532h1v4h-1zM664 530h1v4h-1zM665 529h1v3h-1zM666 527h1v2h-1zM667 528h1v3h-1zM668 530h1v2h-1zM669 532h1v5h-1zM670 531h1v3h-1zM671 527h1v4h-1zM672 523h1v4h-1zM673 524h1v2h-1zM674 526h1v2h-1zM675 528h1v2h-1zM676 530h1v3h-1zM677 533h1v3h-1zM678 536h1v2h-1zM679 534h1v3h-1zM680 530h1v4h-1zM681 526h1v4h-1zM682 527h1v2h-1zM683 529h1v3h-1zM684 532h1v3h-1zM685 531h1v4h-1zM686 531h1v2h-1zM687 530h1v2h-1zM688 530h1v2h-1zM689 530h1v2h-1zM690 530h1v2h-1zM691 531h1v2h-1zM692 528h1v3h-1zM693 526h1v2h-1zM694 523h1v3h-1zM695 524h1v2h-1zM696 526h1v2h-1zM697 528h1v2h-1zM698 530h1v2h-1zM699 531h1v3h-1zM700 532h1v2h-1zM701 531h1v2h-1zM702 530h1v2h-1zM703 528h1v3h-1zM704 527h1v2h-1zM705 527h1v2h-1zM706 529h1v2h-1zM707 531h1v3h-1zM708 530h1v3h-1zM709 529h1v2h-1zM710 529h1v2h-1zM711 529h1v2h-1zM712 530h1v2h-1zM713 530h1v1h-1zM714 529h1v2h-1zM715 527h1v2h-1zM716 525h1v2h-1zM717 526h1v3h-1zM718 527h1v5h-1zM719 532h1v2h-1zM720 534h1v2h-1zM721 536h1v2h-1zM722 536h1v3h-1zM723 534h1v2h-1zM724 531h1v3h-1zM725 530h1v2h-1zM726 528h1v2h-1zM727 527h1v4h-1zM728 528h1v2h-1zM729 530h1v6h-1zM730 534h1v4h-1zM731 535h1v3h-1zM732 535h1v2h-1zM733 534h1v2h-1zM734 534h1v1h-1zM735 534h1v2h-1zM736 533h1v2h-1zM737 529h1v6h-1zM738 527h1v2h-1zM739 527h1v3h-1zM740 529h1v2h-1zM741 531h1v2h-1zM742 532h1v1h-1zM743 532h1v1h-1zM744 532h1v2h-1zM745 531h1v2h-1zM746 530h1v2h-1zM746 530h1v2h-1zM747 531h1v1h-1zM748 529h1v3h-1zM749 521h1v9h-1zM750 506h1v15h-1zM751 489h1v17h-1zM752 450h1v39h-1zM753 393h1v58h-1zM754 356h1v38h-1zM755 317h1v40h-1zM756 273h1v45h-1zM757 262h1v12h-1zM758 258h1v5h-1zM759 256h1v3h-1zM760 258h1v1h-1zM761 258h1v2h-1zM762 259h1v2h-1zM763 258h1v2h-1zM764 255h1v3h-1zM765 252h1v5h-1zM766 250h1v2h-1zM767 241h1v9h-1zM768 239h1v3h-1zM769 237h1v2h-1zM770 236h1v2h-1zM771 235h1v2h-1zM772 236h1v2h-1zM773 237h1v2h-1zM774 236h1v2h-1zM775 230h1v6h-1zM776 228h1v4h-1zM777 227h1v2h-1zM778 225h1v2h-1zM779 224h1v2h-1zM780 223h1v2h-1zM781 222h1v2h-1zM782 220h1v2h-1zM783 216h1v4h-1zM784 213h1v3h-1zM785 211h1v2h-1zM786 210h1v2h-1zM787 211h1v3h-1zM788 214h1v2h-1zM789 216h1v2h-1zM790 218h1v2h-1zM791 218h1v3h-1zM792 218h1v2h-1zM793 218h1v2h-1zM794 219h1v1h-1zM795 219h1v4h-1zM796 220h1v2h-1zM797 221h1v2h-1zM798 222h1v2h-1zM799 222h1v2h-1zM800 221h1v3h-1zM801 217h1v4h-1zM802 213h1v4h-1zM803 210h1v3h-1zM804 209h1v2h-1zM805 209h1v2h-1zM806 208h1v2h-1zM807 208h1v1h-1zM808 209h1v3h-1zM809 212h1v3h-1zM810 214h1v2h-1zM811 214h1v2h-1zM812 214h1v2h-1zM813 213h1v2h-1zM814 213h1v4h-1zM815 214h1v3h-1zM816 217h1v3h-1zM817 219h1v4h-1zM818 217h1v2h-1zM819 215h1v2h-1zM820 214h1v2h-1zM821 214h1v3h-1zM822 214h1v2h-1zM823 215h1v2h-1zM824 212h1v4h-1zM825 212h1v2h-1zM826 210h1v2h-1zM827 211h1v2h-1zM828 213h1v2h-1zM829 215h1v3h-1zM830 217h1v2h-1zM831 213h1v5h-1zM832 209h1v4h-1zM833 204h1v5h-1zM834 204h1v2h-1zM835 204h1v2h-1zM836 204h1v4h-1zM837 207h1v2h-1zM838 208h1v2h-1zM839 209h1v2h-1zM840 210h1v2h-1zM841 210h1v2h-1zM842 214h1v1h-1zM843 211h1v3h-1zM844 209h1v2h-1zM845 207h1v4h-1zM846 205h1v2h-1zM847 203h1v2h-1zM848 204h1v5h-1zM849 207h1v3h-1zM850 210h1v3h-1zM851 213h1v4h-1zM852 216h1v1h-1zM853 214h1v2h-1zM854 211h1v3h-1zM855 210h1v2h-1zM856 209h1v2h-1zM857 208h1v2h-1zM858 208h1v2h-1zM859 210h1v2h-1zM860 212h1v4h-1zM861 214h1v2h-1zM862 212h1v4h-1zM863 210h1v2h-1zM864 207h1v4h-1zM865 204h1v3h-1zM866 204h1v2h-1zM867 206h1v3h-1zM868 209h1v2h-1zM869 211h1v2h-1zM870 212h1v2h-1zM871 211h1v2h-1zM872 209h1v2h-1zM873 208h1v2h-1zM874 207h1v2h-1zM875 207h1v2h-1zM876 207h1v1h-1zM877 206h1v2h-1zM878 208h1v2h-1zM879 210h1v3h-1zM880 209h1v3h-1zM881 206h1v3h-1zM882 205h1v3h-1zM883 206h1v2h-1zM884 207h1v2h-1zM885 206h1v2h-1zM886 202h1v6h-1zM887 203h1v2h-1zM888 205h1v2h-1zM889 207h1v2h-1zM890 207h1v2h-1zM891 206h1v2h-1zM892 206h1v1h-1zM893 206h1v2h-1zM894 204h1v3h-1zM895 205h1v2h-1zM896 205h1v1h-1zM897 205h1v1h-1zM898 205h1v1h-1zM899 205h1v1h-1zM900 206h1v2h-1zM901 208h1v4h-1zM902 208h1v4h-1zM903 205h1v5h-1zM904 202h1v3h-1zM905 202h1v4h-1zM906 206h1v3h-1zM907 209h1v2h-1zM908 210h1v1h-1zM909 209h1v2h-1zM910 208h1v2h-1zM911 207h1v2h-1zM912 207h1v2h-1zM913 205h1v2h-1zM914 203h1v2h-1zM915 203h1v2h-1zM916 205h1v3h-1zM917 208h1v3h-1zM918 210h1v2h-1zM919 211h1v2h-1zM920 212h1v4h-1zM921 206h1v6h-1zM922 205h1v2h-1zM923 206h1v3h-1zM924 209h1v3h-1zM925 211h1v4h-1zM926 207h1v5h-1zM927 203h1v4h-1zM928 202h1v2h-1zM929 203h1v4h-1zM930 207h1v4h-1zM931 211h1v3h-1zM932 210h1v3h-1zM933 207h1v3h-1zM934 205h1v2h-1zM935 203h1v2h-1zM936 203h1v3h-1zM937 204h1v3h-1zM938 207h1v2h-1zM939 208h1v2h-1zM940 210h1v2h-1zM941 211h1v2h-1zM942 209h1v5h-1zM943 205h1v4h-1zM944 202h1v3h-1zM945 203h1v5h-1zM946 208h1v6h-1zM947 208h1v4h-1zM948 206h1v4h-1zM949 206h1v1h-1zM950 206h1v3h-1zM951 209h1v2h-1zM952 208h1v2h-1zM953 204h1v4h-1zM954 201h1v3h-1zM955 201h1v3h-1zM956 202h1v2h-1zM957 203h1v2h-1zM958 204h1v2h-1zM959 205h1v2h-1zM960 206h1v2h-1zM961 206h1v2h-1zM962 206h1v1h-1zM963 206h1v2h-1zM964 207h1v2h-1zM965 207h1v4h-1zM966 210h1v2h-1zM967 207h1v4h-1zM968 202h1v5h-1zM969 202h1v4h-1zM970 206h1v4h-1zM971 208h1v2h-1zM972 205h1v3h-1zM973 201h1v4h-1zM974 200h1v2h-1zM975 201h1v3h-1zM976 203h1v2h-1zM977 204h1v3h-1zM978 207h1v4h-1zM979 209h1v4h-1zM980 207h1v3h-1zM981 207h1v2h-1zM982 207h1v1h-1zM983 207h1v1h-1zM984 207h1v1h-1zM985 207h1v2h-1zM986 206h1v2h-1zM987 206h1v1h-1zM988 203h1v4h-1zM989 205h1v2h-1zM990 204h1v2h-1zM991 205h1v4h-1zM992 209h1v3h-1zM993 206h1v5h-1zM994 203h1v3h-1zM995 203h1v1h-1zM996 203h1v2h-1zM997 204h1v2h-1zM998 202h1v2h-1zM999 198h1v4h-1zM1000 197h1v3h-1zM1001 198h1v2h-1zM1002 198h1v2h-1zM1003 200h1v2h-1zM1004 201h1v2h-1zM1005 202h1v3h-1zM1006 204h1v2h-1zM1007 205h1v1h-1zM1008 203h1v2h-1zM1009 201h1v2h-1zM1010 201h1v1h-1zM1011 200h1v4h-1zM1012 202h1v3h-1zM1013 205h1v2h-1zM1014 207h1v2h-1zM1015 209h1v2h-1zM1016 208h1v2h-1zM1017 204h1v4h-1zM1018 201h1v3h-1zM1019 202h1v2h-1zM1020 204h1v3h-1z" fill="#ffff00" shape-rendering="crispEdges"/>
<rect x="21" y="338" width="1000" height="1" fill="#0064e4"/><rect x="21" y="339" width="1000" height="1" fill="#0036a0"/>
<path d="M21 30h1v1h-1zM21 43h1v1h-1zM21 56h1v1h-1zM21 69h1v1h-1zM21 95h1v1h-1zM21 108h1v1h-1zM21 121h1v1h-1zM21 134h1v1h-1zM21 160h1v1h-1zM21 173h1v1h-1zM21 186h1v1h-1zM21 199h1v1h-1zM21 225h1v1h-1zM21 238h1v1h-1zM21 251h1v1h-1zM21 264h1v1h-1zM21 290h1v1h-1zM21 303h1v1h-1zM21 316h1v1h-1zM21 329h1v1h-1zM21 342h1v1h-1zM21 355h1v1h-1zM21 368h1v1h-1zM21 381h1v1h-1zM21 394h1v1h-1zM21 420h1v1h-1zM21 433h1v1h-1zM21 446h1v1h-1zM21 459h1v1h-1zM21 485h1v1h-1zM21 498h1v1h-1zM21 511h1v1h-1zM21 524h1v1h-1zM21 550h1v1h-1zM21 563h1v1h-1zM21 576h1v1h-1zM21 589h1v1h-1zM21 615h1v1h-1zM21 628h1v1h-1zM21 641h1v1h-1zM21 654h1v1h-1zM22 82h1v1h-1zM22 147h1v1h-1zM22 212h1v1h-1zM22 277h1v1h-1zM22 407h1v1h-1zM22 472h1v1h-1zM22 537h1v1h-1zM22 602h1v1h-1zM23 30h1v1h-1zM23 43h1v1h-1zM23 56h1v1h-1zM23 69h1v1h-1zM23 95h1v1h-1zM23 108h1v1h-1zM23 121h1v1h-1zM23 134h1v1h-1zM23 160h1v1h-1zM23 173h1v1h-1zM23 186h1v1h-1zM23 199h1v1h-1zM23 225h1v1h-1zM23 238h1v1h-1zM23 251h1v1h-1zM23 264h1v1h-1zM23 290h1v1h-1zM23 303h1v1h-1zM23 316h1v1h-1zM23 329h1v1h-1zM23 342h1v1h-1zM23 355h1v1h-1zM23 368h1v1h-1zM23 381h1v1h-1zM23 394h1v1h-1zM23 420h1v1h-1zM23 433h1v1h-1zM23 446h1v1h-1zM23 459h1v1h-1zM23 485h1v1h-1zM23 498h1v1h-1zM23 511h1v1h-1zM23 524h1v1h-1zM23 550h1v1h-1zM23 563h1v1h-1zM23 576h1v1h-1zM23 589h1v1h-1zM23 615h1v1h-1zM23 628h1v1h-1zM23 641h1v1h-1zM23 654h1v1h-1zM24 82h1v1h-1zM24 147h1v1h-1zM24 212h1v1h-1zM24 277h1v1h-1zM24 407h1v1h-1zM24 472h1v1h-1zM24 537h1v1h-1zM24 602h1v1h-1zM25 342h1v1h-1zM26 82h1v1h-1zM26 147h1v1h-1zM26 212h1v1h-1zM26 277h1v1h-1zM26 407h1v1h-1zM26 472h1v1h-1zM26 537h1v1h-1zM26 602h1v1h-1zM27 342h1v1h-1zM29 342h1v1h-1zM31 342h1v1h-1zM33 342h1v1h-1zM35 342h1v1h-1zM37 342h1v1h-1zM39 342h1v1h-1zM41 17h1v1h-1zM41 19h1v1h-1zM41 82h1v1h-1zM41 147h1v1h-1zM41 212h1v1h-1zM41 277h1v1h-1zM41 339h1v1h-1zM41 341h1v1h-1zM41 342h1v1h-1zM41 343h1v1h-1zM41 345h1v1h-1zM41 407h1v1h-1zM41 472h1v1h-1zM41 537h1v1h-1zM41 602h1v1h-1zM41 665h1v1h-1zM41 667h1v1h-1zM43 342h1v1h-1zM45 342h1v1h-1zM47 342h1v1h-1zM49 342h1v1h-1zM51 342h1v1h-1zM53 342h1v1h-1zM55 342h1v1h-1zM57 342h1v1h-1zM59 342h1v1h-1zM61 17h1v1h-1zM61 19h1v1h-1zM61 82h1v1h-1zM61 147h1v1h-1zM61 212h1v1h-1zM61 277h1v1h-1zM61 339h1v1h-1zM61 341h1v1h-1zM61 342h1v1h-1zM61 343h1v1h-1zM61 345h1v1h-1zM61 407h1v1h-1zM61 472h1v1h-1zM61 537h1v1h-1zM61 602h1v1h-1zM61 665h1v1h-1zM61 667h1v1h-1zM63 342h1v1h-1zM65 342h1v1h-1zM67 342h1v1h-1zM69 342h1v1h-1zM71 342h1v1h-1zM73 342h1v1h-1zM75 342h1v1h-1zM77 342h1v1h-1zM79 342h1v1h-1zM81 17h1v1h-1zM81 19h1v1h-1zM81 82h1v1h-1zM81 147h1v1h-1zM81 212h1v1h-1zM81 277h1v1h-1zM81 339h1v1h-1zM81 341h1v1h-1zM81 342h1v1h-1zM81 343h1v1h-1zM81 345h1v1h-1zM81 407h1v1h-1zM81 472h1v1h-1zM81 537h1v1h-1zM81 602h1v1h-1zM81 665h1v1h-1zM81 667h1v1h-1zM83 342h1v1h-1zM85 342h1v1h-1zM87 342h1v1h-1zM89 342h1v1h-1zM91 342h1v1h-1zM93 342h1v1h-1zM95 342h1v1h-1zM97 342h1v1h-1zM99 342h1v1h-1zM101 17h1v1h-1zM101 19h1v1h-1zM101 82h1v1h-1zM101 147h1v1h-1zM101 212h1v1h-1zM101 277h1v1h-1zM101 339h1v1h-1zM101 341h1v1h-1zM101 342h1v1h-1zM101 343h1v1h-1zM101 345h1v1h-1zM101 407h1v1h-1zM101 472h1v1h-1zM101 537h1v1h-1zM101 602h1v1h-1zM101 665h1v1h-1zM101 667h1v1h-1zM103 342h1v1h-1zM105 342h1v1h-1zM107 342h1v1h-1zM109 342h1v1h-1zM111 342h1v1h-1zM113 342h1v1h-1zM115 342h1v1h-1zM117 342h1v1h-1zM119 342h1v1h-1zM121 18h1v1h-1zM121 20h1v1h-1zM121 22h1v1h-1zM121 30h1v1h-1zM121 43h1v1h-1zM121 56h1v1h-1zM121 69h1v1h-1zM121 82h1v1h-1zM121 95h1v1h-1zM121 108h1v1h-1zM121 121h1v1h-1zM121 134h1v1h-1zM121 147h1v1h-1zM121 160h1v1h-1zM121 173h1v1h-1zM121 186h1v1h-1zM121 199h1v1h-1zM121 212h1v1h-1zM121 225h1v1h-1zM121 238h1v1h-1zM121 251h1v1h-1zM121 264h1v1h-1zM121 277h1v1h-1zM121 290h1v1h-1zM121 303h1v1h-1zM121 316h1v1h-1zM121 329h1v1h-1zM121 336h1v1h-1zM121 338h1v1h-1zM121 340h1v1h-1zM121 342h1v1h-1zM121 344h1v1h-1zM121 346h1v1h-1zM121 348h1v1h-1zM121 355h1v1h-1zM121 368h1v1h-1zM121 381h1v1h-1zM121 394h1v1h-1zM121 407h1v1h-1zM121 420h1v1h-1zM121 433h1v1h-1zM121 446h1v1h-1zM121 459h1v1h-1zM121 472h1v1h-1zM121 485h1v1h-1zM121 498h1v1h-1zM121 511h1v1h-1zM121 524h1v1h-1zM121 537h1v1h-1zM121 550h1v1h-1zM121 563h1v1h-1zM121 576h1v1h-1zM121 589h1v1h-1zM121 602h1v1h-1zM121 615h1v1h-1zM121 628h1v1h-1zM121 641h1v1h-1zM121 654h1v1h-1zM121 662h1v1h-1zM121 664h1v1h-1zM121 666h1v1h-1zM123 342h1v1h-1zM125 342h1v1h-1zM127 342h1v1h-1zM129 342h1v1h-1zM131 342h1v1h-1zM133 342h1v1h-1zM135 342h1v1h-1zM137 342h1v1h-1zM139 342h1v1h-1zM141 17h1v1h-1zM141 19h1v1h-1zM141 82h1v1h-1zM141 147h1v1h-1zM141 212h1v1h-1zM141 277h1v1h-1zM141 339h1v1h-1zM141 341h1v1h-1zM141 342h1v1h-1zM141 343h1v1h-1zM141 345h1v1h-1zM141 407h1v1h-1zM141 472h1v1h-1zM141 537h1v1h-1zM141 602h1v1h-1zM141 665h1v1h-1zM141 667h1v1h-1zM143 342h1v1h-1zM145 342h1v1h-1zM147 342h1v1h-1zM149 342h1v1h-1zM151 342h1v1h-1zM153 342h1v1h-1zM155 342h1v1h-1zM157 342h1v1h-1zM159 342h1v1h-1zM161 17h1v1h-1zM161 19h1v1h-1zM161 82h1v1h-1zM161 147h1v1h-1zM161 212h1v1h-1zM161 277h1v1h-1zM161 339h1v1h-1zM161 341h1v1h-1zM161 342h1v1h-1zM161 343h1v1h-1zM161 345h1v1h-1zM161 407h1v1h-1zM161 472h1v1h-1zM161 537h1v1h-1zM161 602h1v1h-1zM161 665h1v1h-1zM161 667h1v1h-1zM163 342h1v1h-1zM165 342h1v1h-1zM167 342h1v1h-1zM169 342h1v1h-1zM171 342h1v1h-1zM173 342h1v1h-1zM175 342h1v1h-1zM177 342h1v1h-1zM179 342h1v1h-1zM181 17h1v1h-1zM181 19h1v1h-1zM181 82h1v1h-1zM181 147h1v1h-1zM181 212h1v1h-1zM181 277h1v1h-1zM181 339h1v1h-1zM181 341h1v1h-1zM181 342h1v1h-1zM181 343h1v1h-1zM181 345h1v1h-1zM181 407h1v1h-1zM181 472h1v1h-1zM181 537h1v1h-1zM181 602h1v1h-1zM181 665h1v1h-1zM181 667h1v1h-1zM183 342h1v1h-1zM185 342h1v1h-1zM187 342h1v1h-1zM189 342h1v1h-1zM191 342h1v1h-1zM193 342h1v1h-1zM195 342h1v1h-1zM197 342h1v1h-1zM199 342h1v1h-1zM201 17h1v1h-1zM201 19h1v1h-1zM201 82h1v1h-1zM201 147h1v1h-1zM201 212h1v1h-1zM201 277h1v1h-1zM201 339h1v1h-1zM201 341h1v1h-1zM201 342h1v1h-1zM201 343h1v1h-1zM201 345h1v1h-1zM201 407h1v1h-1zM201 472h1v1h-1zM201 537h1v1h-1zM201 602h1v1h-1zM201 665h1v1h-1zM201 667h1v1h-1zM203 342h1v1h-1zM205 342h1v1h-1zM207 342h1v1h-1zM209 342h1v1h-1zM211 342h1v1h-1zM213 342h1v1h-1zM215 342h1v1h-1zM217 342h1v1h-1zM219 342h1v1h-1zM221 18h1v1h-1zM221 20h1v1h-1zM221 22h1v1h-1zM221 30h1v1h-1zM221 43h1v1h-1zM221 56h1v1h-1zM221 69h1v1h-1zM221 82h1v1h-1zM221 95h1v1h-1zM221 108h1v1h-1zM221 121h1v1h-1zM221 134h1v1h-1zM221 147h1v1h-1zM221 160h1v1h-1zM221 173h1v1h-1zM221 186h1v1h-1zM221 199h1v1h-1zM221 212h1v1h-1zM221 225h1v1h-1zM221 238h1v1h-1zM221 251h1v1h-1zM221 264h1v1h-1zM221 277h1v1h-1zM221 290h1v1h-1zM221 303h1v1h-1zM221 316h1v1h-1zM221 329h1v1h-1zM221 336h1v1h-1zM221 338h1v1h-1zM221 340h1v1h-1zM221 342h1v1h-1zM221 344h1v1h-1zM221 346h1v1h-1zM221 348h1v1h-1zM221 355h1v1h-1zM221 368h1v1h-1zM221 381h1v1h-1zM221 394h1v1h-1zM221 407h1v1h-1zM221 420h1v1h-1zM221 433h1v1h-1zM221 446h1v1h-1zM221 459h1v1h-1zM221 472h1v1h-1zM221 485h1v1h-1zM221 498h1v1h-1zM221 511h1v1h-1zM221 524h1v1h-1zM221 537h1v1h-1zM221 550h1v1h-1zM221 563h1v1h-1zM221 576h1v1h-1zM221 589h1v1h-1zM221 602h1v1h-1zM221 615h1v1h-1zM221 628h1v1h-1zM221 641h1v1h-1zM221 654h1v1h-1zM221 662h1v1h-1zM221 664h1v1h-1zM221 666h1v1h-1zM223 342h1v1h-1zM225 342h1v1h-1zM227 342h1v1h-1zM229 342h1v1h-1zM231 342h1v1h-1zM233 342h1v1h-1zM235 342h1v1h-1zM237 342h1v1h-1zM239 342h1v1h-1zM241 17h1v1h-1zM241 19h1v1h-1zM241 82h1v1h-1zM241 147h1v1h-1zM241 212h1v1h-1zM241 277h1v1h-1zM241 339h1v1h-1zM241 341h1v1h-1zM241 342h1v1h-1zM241 343h1v1h-1zM241 345h1v1h-1zM241 407h1v1h-1zM241 472h1v1h-1zM241 537h1v1h-1zM241 602h1v1h-1zM241 665h1v1h-1zM241 667h1v1h-1zM243 342h1v1h-1zM245 342h1v1h-1zM247 342h1v1h-1zM249 342h1v1h-1zM251 342h1v1h-1zM253 342h1v1h-1zM255 342h1v1h-1zM257 342h1v1h-1zM259 342h1v1h-1zM261 17h1v1h-1zM261 19h1v1h-1zM261 82h1v1h-1zM261 147h1v1h-1zM261 212h1v1h-1zM261 277h1v1h-1zM261 339h1v1h-1zM261 341h1v1h-1zM261 342h1v1h-1zM261 343h1v1h-1zM261 345h1v1h-1zM261 407h1v1h-1zM261 472h1v1h-1zM261 537h1v1h-1zM261 602h1v1h-1zM261 665h1v1h-1zM261 667h1v1h-1zM263 342h1v1h-1zM265 342h1v1h-1zM267 342h1v1h-1zM269 342h1v1h-1zM271 342h1v1h-1zM273 342h1v1h-1zM275 342h1v1h-1zM277 342h1v1h-1zM279 342h1v1h-1zM281 17h1v1h-1zM281 19h1v1h-1zM281 82h1v1h-1zM281 147h1v1h-1zM281 212h1v1h-1zM281 277h1v1h-1zM281 339h1v1h-1zM281 341h1v1h-1zM281 342h1v1h-1zM281 343h1v1h-1zM281 345h1v1h-1zM281 407h1v1h-1zM281 472h1v1h-1zM281 537h1v1h-1zM281 602h1v1h-1zM281 665h1v1h-1zM281 667h1v1h-1zM283 342h1v1h-1zM285 342h1v1h-1zM287 342h1v1h-1zM289 342h1v1h-1zM291 342h1v1h-1zM293 342h1v1h-1zM295 342h1v1h-1zM297 342h1v1h-1zM299 342h1v1h-1zM301 17h1v1h-1zM301 19h1v1h-1zM301 82h1v1h-1zM301 147h1v1h-1zM301 212h1v1h-1zM301 277h1v1h-1zM301 339h1v1h-1zM301 341h1v1h-1zM301 342h1v1h-1zM301 343h1v1h-1zM301 345h1v1h-1zM301 407h1v1h-1zM301 472h1v1h-1zM301 537h1v1h-1zM301 602h1v1h-1zM301 665h1v1h-1zM301 667h1v1h-1zM303 342h1v1h-1zM305 342h1v1h-1zM307 342h1v1h-1zM309 342h1v1h-1zM311 342h1v1h-1zM313 342h1v1h-1zM315 342h1v1h-1zM317 342h1v1h-1zM319 342h1v1h-1zM321 18h1v1h-1zM321 20h1v1h-1zM321 22h1v1h-1zM321 30h1v1h-1zM321 43h1v1h-1zM321 56h1v1h-1zM321 69h1v1h-1zM321 82h1v1h-1zM321 95h1v1h-1zM321 108h1v1h-1zM321 121h1v1h-1zM321 134h1v1h-1zM321 147h1v1h-1zM321 160h1v1h-1zM321 173h1v1h-1zM321 186h1v1h-1zM321 199h1v1h-1zM321 212h1v1h-1zM321 225h1v1h-1zM321 238h1v1h-1zM321 251h1v1h-1zM321 264h1v1h-1zM321 277h1v1h-1zM321 290h1v1h-1zM321 303h1v1h-1zM321 316h1v1h-1zM321 329h1v1h-1zM321 336h1v1h-1zM321 338h1v1h-1zM321 340h1v1h-1zM321 342h1v1h-1zM321 344h1v1h-1zM321 346h1v1h-1zM321 348h1v1h-1zM321 355h1v1h-1zM321 368h1v1h-1zM321 381h1v1h-1zM321 394h1v1h-1zM321 407h1v1h-1zM321 420h1v1h-1zM321 433h1v1h-1zM321 446h1v1h-1zM321 459h1v1h-1zM321 472h1v1h-1zM321 485h1v1h-1zM321 498h1v1h-1zM321 511h1v1h-1zM321 524h1v1h-1zM321 537h1v1h-1zM321 550h1v1h-1zM321 563h1v1h-1zM321 576h1v1h-1zM321 589h1v1h-1zM321 602h1v1h-1zM321 615h1v1h-1zM321 628h1v1h-1zM321 641h1v1h-1zM321 654h1v1h-1zM321 662h1v1h-1zM321 664h1v1h-1zM321 666h1v1h-1zM323 342h1v1h-1zM325 342h1v1h-1zM327 342h1v1h-1zM329 342h1v1h-1zM331 342h1v1h-1zM333 342h1v1h-1zM335 342h1v1h-1zM337 342h1v1h-1zM339 342h1v1h-1zM341 17h1v1h-1zM341 19h1v1h-1zM341 82h1v1h-1zM341 147h1v1h-1zM341 212h1v1h-1zM341 277h1v1h-1zM341 339h1v1h-1zM341 341h1v1h-1zM341 342h1v1h-1zM341 343h1v1h-1zM341 345h1v1h-1zM341 407h1v1h-1zM341 472h1v1h-1zM341 537h1v1h-1zM341 602h1v1h-1zM341 665h1v1h-1zM341 667h1v1h-1zM343 342h1v1h-1zM345 342h1v1h-1zM347 342h1v1h-1zM349 342h1v1h-1zM351 342h1v1h-1zM353 342h1v1h-1zM355 342h1v1h-1zM357 342h1v1h-1zM359 342h1v1h-1zM361 17h1v1h-1zM361 19h1v1h-1zM361 82h1v1h-1zM361 147h1v1h-1zM361 212h1v1h-1zM361 277h1v1h-1zM361 339h1v1h-1zM361 341h1v1h-1zM361 342h1v1h-1zM361 343h1v1h-1zM361 345h1v1h-1zM361 407h1v1h-1zM361 472h1v1h-1zM361 537h1v1h-1zM361 602h1v1h-1zM361 665h1v1h-1zM361 667h1v1h-1zM363 342h1v1h-1zM365 342h1v1h-1zM367 342h1v1h-1zM369 342h1v1h-1zM371 342h1v1h-1zM373 342h1v1h-1zM375 342h1v1h-1zM377 342h1v1h-1zM379 342h1v1h-1zM381 17h1v1h-1zM381 19h1v1h-1zM381 82h1v1h-1zM381 147h1v1h-1zM381 212h1v1h-1zM381 277h1v1h-1zM381 339h1v1h-1zM381 341h1v1h-1zM381 342h1v1h-1zM381 343h1v1h-1zM381 345h1v1h-1zM381 407h1v1h-1zM381 472h1v1h-1zM381 537h1v1h-1zM381 602h1v1h-1zM381 665h1v1h-1zM381 667h1v1h-1zM383 342h1v1h-1zM385 342h1v1h-1zM387 342h1v1h-1zM389 342h1v1h-1zM391 342h1v1h-1zM393 342h1v1h-1zM395 342h1v1h-1zM397 342h1v1h-1zM399 342h1v1h-1zM401 17h1v1h-1zM401 19h1v1h-1zM401 82h1v1h-1zM401 147h1v1h-1zM401 212h1v1h-1zM401 277h1v1h-1zM401 339h1v1h-1zM401 341h1v1h-1zM401 342h1v1h-1zM401 343h1v1h-1zM401 345h1v1h-1zM401 407h1v1h-1zM401 472h1v1h-1zM401 537h1v1h-1zM401 602h1v1h-1zM401 665h1v1h-1zM401 667h1v1h-1zM403 342h1v1h-1zM405 342h1v1h-1zM407 342h1v1h-1zM409 342h1v1h-1zM411 342h1v1h-1zM413 342h1v1h-1zM415 342h1v1h-1zM417 342h1v1h-1zM419 342h1v1h-1zM421 18h1v1h-1zM421 20h1v1h-1zM421 22h1v1h-1zM421 30h1v1h-1zM421 43h1v1h-1zM421 56h1v1h-1zM421 69h1v1h-1zM421 82h1v1h-1zM421 95h1v1h-1zM421 108h1v1h-1zM421 121h1v1h-1zM421 134h1v1h-1zM421 147h1v1h-1zM421 160h1v1h-1zM421 173h1v1h-1zM421 186h1v1h-1zM421 199h1v1h-1zM421 212h1v1h-1zM421 225h1v1h-1zM421 238h1v1h-1zM421 251h1v1h-1zM421 264h1v1h-1zM421 277h1v1h-1zM421 290h1v1h-1zM421 303h1v1h-1zM421 316h1v1h-1zM421 329h1v1h-1zM421 336h1v1h-1zM421 338h1v1h-1zM421 340h1v1h-1zM421 342h1v1h-1zM421 344h1v1h-1zM421 346h1v1h-1zM421 348h1v1h-1zM421 355h1v1h-1zM421 368h1v1h-1zM421 381h1v1h-1zM421 394h1v1h-1zM421 407h1v1h-1zM421 420h1v1h-1zM421 433h1v1h-1zM421 446h1v1h-1zM421 459h1v1h-1zM421 472h1v1h-1zM421 485h1v1h-1zM421 498h1v1h-1zM421 511h1v1h-1zM421 524h1v1h-1zM421 537h1v1h-1zM421 550h1v1h-1zM421 563h1v1h-1zM421 576h1v1h-1zM421 589h1v1h-1zM421 602h1v1h-1zM421 615h1v1h-1zM421 628h1v1h-1zM421 641h1v1h-1zM421 654h1v1h-1zM421 662h1v1h-1zM421 664h1v1h-1zM421 666h1v1h-1zM423 342h1v1h-1zM425 342h1v1h-1zM427 342h1v1h-1zM429 342h1v1h-1zM431 342h1v1h-1zM433 342h1v1h-1zM435 342h1v1h-1zM437 342h1v1h-1zM439 342h1v1h-1zM441 17h1v1h-1zM441 19h1v1h-1zM441 82h1v1h-1zM441 147h1v1h-1zM441 212h1v1h-1zM441 277h1v1h-1zM441 339h1v1h-1zM441 341h1v1h-1zM441 342h1v1h-1zM441 343h1v1h-1zM441 345h1v1h-1zM441 407h1v1h-1zM441 472h1v1h-1zM441 537h1v1h-1zM441 602h1v1h-1zM441 665h1v1h-1zM441 667h1v1h-1zM443 342h1v1h-1zM445 342h1v1h-1zM447 342h1v1h-1zM449 342h1v1h-1zM451 342h1v1h-1zM453 342h1v1h-1zM455 342h1v1h-1zM457 342h1v1h-1zM459 342h1v1h-1zM461 17h1v1h-1zM461 19h1v1h-1zM461 82h1v1h-1zM461 147h1v1h-1zM461 212h1v1h-1zM461 277h1v1h-1zM461 339h1v1h-1zM461 341h1v1h-1zM461 342h1v1h-1zM461 343h1v1h-1zM461 345h1v1h-1zM461 407h1v1h-1zM461 472h1v1h-1zM461 537h1v1h-1zM461 602h1v1h-1zM461 665h1v1h-1zM461 667h1v1h-1zM463 342h1v1h-1zM465 342h1v1h-1zM467 342h1v1h-1zM469 342h1v1h-1zM471 342h1v1h-1zM473 342h1v1h-1zM475 342h1v1h-1zM477 342h1v1h-1zM479 342h1v1h-1zM481 17h1v1h-1zM481 19h1v1h-1zM481 82h1v1h-1zM481 147h1v1h-1zM481 212h1v1h-1zM481 277h1v1h-1zM481 339h1v1h-1zM481 341h1v1h-1zM481 342h1v1h-1zM481 343h1v1h-1zM481 345h1v1h-1zM481 407h1v1h-1zM481 472h1v1h-1zM481 537h1v1h-1zM481 602h1v1h-1zM481 665h1v1h-1zM481 667h1v1h-1zM483 342h1v1h-1zM485 342h1v1h-1zM487 342h1v1h-1zM489 342h1v1h-1zM491 342h1v1h-1zM493 342h1v1h-1zM495 342h1v1h-1zM497 342h1v1h-1zM499 342h1v1h-1zM501 17h1v1h-1zM501 19h1v1h-1zM501 82h1v1h-1zM501 147h1v1h-1zM501 212h1v1h-1zM501 277h1v1h-1zM501 339h1v1h-1zM501 341h1v1h-1zM501 342h1v1h-1zM501 343h1v1h-1zM501 345h1v1h-1zM501 407h1v1h-1zM501 472h1v1h-1zM501 537h1v1h-1zM501 602h1v1h-1zM501 665h1v1h-1zM501 667h1v1h-1zM503 342h1v1h-1zM505 342h1v1h-1zM507 342h1v1h-1zM509 342h1v1h-1zM511 342h1v1h-1zM513 342h1v1h-1zM515 82h1v1h-1zM515 147h1v1h-1zM515 212h1v1h-1zM515 277h1v1h-1zM515 342h1v1h-1zM515 407h1v1h-1zM515 472h1v1h-1zM515 537h1v1h-1zM515 602h1v1h-1zM517 82h1v1h-1zM517 147h1v1h-1zM517 212h1v1h-1zM517 277h1v1h-1zM517 342h1v1h-1zM517 407h1v1h-1zM517 472h1v1h-1zM517 537h1v1h-1zM517 602h1v1h-1zM518 30h1v1h-1zM518 43h1v1h-1zM518 56h1v1h-1zM518 69h1v1h-1zM518 95h1v1h-1zM518 108h1v1h-1zM518 121h1v1h-1zM518 134h1v1h-1zM518 160h1v1h-1zM518 173h1v1h-1zM518 186h1v1h-1zM518 199h1v1h-1zM518 225h1v1h-1zM518 238h1v1h-1zM518 251h1v1h-1zM518 264h1v1h-1zM518 290h1v1h-1zM518 303h1v1h-1zM518 316h1v1h-1zM518 329h1v1h-1zM518 355h1v1h-1zM518 368h1v1h-1zM518 381h1v1h-1zM518 394h1v1h-1zM518 420h1v1h-1zM518 433h1v1h-1zM518 446h1v1h-1zM518 459h1v1h-1zM518 485h1v1h-1zM518 498h1v1h-1zM518 511h1v1h-1zM518 524h1v1h-1zM518 550h1v1h-1zM518 563h1v1h-1zM518 576h1v1h-1zM518 589h1v1h-1zM518 615h1v1h-1zM518 628h1v1h-1zM518 641h1v1h-1zM518 654h1v1h-1zM519 82h1v1h-1zM519 147h1v1h-1zM519 212h1v1h-1zM519 277h1v1h-1zM519 342h1v1h-1zM519 407h1v1h-1zM519 472h1v1h-1zM519 537h1v1h-1zM519 602h1v1h-1zM520 30h1v1h-1zM520 43h1v1h-1zM520 56h1v1h-1zM520 69h1v1h-1zM520 95h1v1h-1zM520 108h1v1h-1zM520 121h1v1h-1zM520 134h1v1h-1zM520 160h1v1h-1zM520 173h1v1h-1zM520 186h1v1h-1zM520 199h1v1h-1zM520 225h1v1h-1zM520 238h1v1h-1zM520 251h1v1h-1zM520 264h1v1h-1zM520 290h1v1h-1zM520 303h1v1h-1zM520 316h1v1h-1zM520 329h1v1h-1zM520 355h1v1h-1zM520 368h1v1h-1zM520 381h1v1h-1zM520 394h1v1h-1zM520 420h1v1h-1zM520 433h1v1h-1zM520 446h1v1h-1zM520 459h1v1h-1zM520 485h1v1h-1zM520 498h1v1h-1zM520 511h1v1h-1zM520 524h1v1h-1zM520 550h1v1h-1zM520 563h1v1h-1zM520 576h1v1h-1zM520 589h1v1h-1zM520 615h1v1h-1zM520 628h1v1h-1zM520 641h1v1h-1zM520 654h1v1h-1zM521 18h1v1h-1zM521 20h1v1h-1zM521 22h1v1h-1zM521 24h1v1h-1zM521 26h1v1h-1zM521 28h1v1h-1zM521 30h1v1h-1zM521 32h1v1h-1zM521 34h1v1h-1zM521 36h1v1h-1zM521 38h1v1h-1zM521 40h1v1h-1zM521 42h1v1h-1zM521 43h1v1h-1zM521 44h1v1h-1zM521 46h1v1h-1zM521 48h1v1h-1zM521 50h1v1h-1zM521 52h1v1h-1zM521 54h1v1h-1zM521 56h1v1h-1zM521 58h1v1h-1zM521 60h1v1h-1zM521 62h1v1h-1zM521 64h1v1h-1zM521 66h1v1h-1zM521 68h1v1h-1zM521 69h1v1h-1zM521 70h1v1h-1zM521 72h1v1h-1zM521 74h1v1h-1zM521 76h1v1h-1zM521 78h1v1h-1zM521 80h1v1h-1zM521 82h1v1h-1zM521 84h1v1h-1zM521 86h1v1h-1zM521 88h1v1h-1zM521 90h1v1h-1zM521 92h1v1h-1zM521 94h1v1h-1zM521 95h1v1h-1zM521 96h1v1h-1zM521 98h1v1h-1zM521 100h1v1h-1zM521 102h1v1h-1zM521 104h1v1h-1zM521 106h1v1h-1zM521 108h1v1h-1zM521 110h1v1h-1zM521 112h1v1h-1zM521 114h1v1h-1zM521 116h1v1h-1zM521 118h1v1h-1zM521 120h1v1h-1zM521 121h1v1h-1zM521 122h1v1h-1zM521 124h1v1h-1zM521 126h1v1h-1zM521 128h1v1h-1zM521 130h1v1h-1zM521 132h1v1h-1zM521 134h1v1h-1zM521 136h1v1h-1zM521 138h1v1h-1zM521 140h1v1h-1zM521 142h1v1h-1zM521 144h1v1h-1zM521 146h1v1h-1zM521 147h1v1h-1zM521 148h1v1h-1zM521 150h1v1h-1zM521 152h1v1h-1zM521 154h1v1h-1zM521 156h1v1h-1zM521 158h1v1h-1zM521 160h1v1h-1zM521 162h1v1h-1zM521 164h1v1h-1zM521 166h1v1h-1zM521 168h1v1h-1zM521 170h1v1h-1zM521 172h1v1h-1zM521 173h1v1h-1zM521 174h1v1h-1zM521 176h1v1h-1zM521 178h1v1h-1zM521 180h1v1h-1zM521 182h1v1h-1zM521 184h1v1h-1zM521 186h1v1h-1zM521 188h1v1h-1zM521 190h1v1h-1zM521 192h1v1h-1zM521 194h1v1h-1zM521 196h1v1h-1zM521 198h1v1h-1zM521 199h1v1h-1zM521 200h1v1h-1zM521 202h1v1h-1zM521 204h1v1h-1zM521 206h1v1h-1zM521 208h1v1h-1zM521 210h1v1h-1zM521 212h1v1h-1zM521 214h1v1h-1zM521 216h1v1h-1zM521 218h1v1h-1zM521 220h1v1h-1zM521 222h1v1h-1zM521 224h1v1h-1zM521 225h1v1h-1zM521 226h1v1h-1zM521 228h1v1h-1zM521 230h1v1h-1zM521 232h1v1h-1zM521 234h1v1h-1zM521 236h1v1h-1zM521 238h1v1h-1zM521 240h1v1h-1zM521 242h1v1h-1zM521 244h1v1h-1zM521 246h1v1h-1zM521 248h1v1h-1zM521 250h1v1h-1zM521 251h1v1h-1zM521 252h1v1h-1zM521 254h1v1h-1zM521 256h1v1h-1zM521 258h1v1h-1zM521 260h1v1h-1zM521 262h1v1h-1zM521 264h1v1h-1zM521 266h1v1h-1zM521 268h1v1h-1zM521 270h1v1h-1zM521 272h1v1h-1zM521 274h1v1h-1zM521 276h1v1h-1zM521 277h1v1h-1zM521 278h1v1h-1zM521 280h1v1h-1zM521 282h1v1h-1zM521 284h1v1h-1zM521 286h1v1h-1zM521 288h1v1h-1zM521 290h1v1h-1zM521 292h1v1h-1zM521 294h1v1h-1zM521 296h1v1h-1zM521 298h1v1h-1zM521 300h1v1h-1zM521 302h1v1h-1zM521 303h1v1h-1zM521 304h1v1h-1zM521 306h1v1h-1zM521 308h1v1h-1zM521 310h1v1h-1zM521 312h1v1h-1zM521 314h1v1h-1zM521 316h1v1h-1zM521 318h1v1h-1zM521 320h1v1h-1zM521 322h1v1h-1zM521 324h1v1h-1zM521 326h1v1h-1zM521 328h1v1h-1zM521 329h1v1h-1zM521 330h1v1h-1zM521 332h1v1h-1zM521 334h1v1h-1zM521 336h1v1h-1zM521 338h1v1h-1zM521 340h1v1h-1zM521 342h1v1h-1zM521 344h1v1h-1zM521 346h1v1h-1zM521 348h1v1h-1zM521 350h1v1h-1zM521 352h1v1h-1zM521 354h1v1h-1zM521 355h1v1h-1zM521 356h1v1h-1zM521 358h1v1h-1zM521 360h1v1h-1zM521 362h1v1h-1zM521 364h1v1h-1zM521 366h1v1h-1zM521 368h1v1h-1zM521 370h1v1h-1zM521 372h1v1h-1zM521 374h1v1h-1zM521 376h1v1h-1zM521 378h1v1h-1zM521 380h1v1h-1zM521 381h1v1h-1zM521 382h1v1h-1zM521 384h1v1h-1zM521 386h1v1h-1zM521 388h1v1h-1zM521 390h1v1h-1zM521 392h1v1h-1zM521 394h1v1h-1zM521 396h1v1h-1zM521 398h1v1h-1zM521 400h1v1h-1zM521 402h1v1h-1zM521 404h1v1h-1zM521 406h1v1h-1zM521 407h1v1h-1zM521 408h1v1h-1zM521 410h1v1h-1zM521 412h1v1h-1zM521 414h1v1h-1zM521 416h1v1h-1zM521 418h1v1h-1zM521 420h1v1h-1zM521 422h1v1h-1zM521 424h1v1h-1zM521 426h1v1h-1zM521 428h1v1h-1zM521 430h1v1h-1zM521 432h1v1h-1zM521 433h1v1h-1zM521 434h1v1h-1zM521 436h1v1h-1zM521 438h1v1h-1zM521 440h1v1h-1zM521 442h1v1h-1zM521 444h1v1h-1zM521 446h1v1h-1zM521 448h1v1h-1zM521 450h1v1h-1zM521 452h1v1h-1zM521 454h1v1h-1zM521 456h1v1h-1zM521 458h1v1h-1zM521 459h1v1h-1zM521 460h1v1h-1zM521 462h1v1h-1zM521 464h1v1h-1zM521 466h1v1h-1zM521 468h1v1h-1zM521 470h1v1h-1zM521 472h1v1h-1zM521 474h1v1h-1zM521 476h1v1h-1zM521 478h1v1h-1zM521 480h1v1h-1zM521 482h1v1h-1zM521 484h1v1h-1zM521 485h1v1h-1zM521 486h1v1h-1zM521 488h1v1h-1zM521 490h1v1h-1zM521 492h1v1h-1zM521 494h1v1h-1zM521 496h1v1h-1zM521 498h1v1h-1zM521 500h1v1h-1zM521 502h1v1h-1zM521 504h1v1h-1zM521 506h1v1h-1zM521 508h1v1h-1zM521 510h1v1h-1zM521 511h1v1h-1zM521 512h1v1h-1zM521 514h1v1h-1zM521 516h1v1h-1zM521 518h1v1h-1zM521 520h1v1h-1zM521 522h1v1h-1zM521 524h1v1h-1zM521 526h1v1h-1zM521 528h1v1h-1zM521 530h1v1h-1zM521 532h1v1h-1zM521 534h1v1h-1zM521 536h1v1h-1zM521 537h1v1h-1zM521 538h1v1h-1zM521 540h1v1h-1zM521 542h1v1h-1zM521 544h1v1h-1zM521 546h1v1h-1zM521 548h1v1h-1zM521 550h1v1h-1zM521 552h1v1h-1zM521 554h1v1h-1zM521 556h1v1h-1zM521 558h1v1h-1zM521 560h1v1h-1zM521 562h1v1h-1zM521 563h1v1h-1zM521 564h1v1h-1zM521 566h1v1h-1zM521 568h1v1h-1zM521 570h1v1h-1zM521 572h1v1h-1zM521 574h1v1h-1zM521 576h1v1h-1zM521 578h1v1h-1zM521 580h1v1h-1zM521 582h1v1h-1zM521 584h1v1h-1zM521 586h1v1h-1zM521 588h1v1h-1zM521 589h1v1h-1zM521 590h1v1h-1zM521 592h1v1h-1zM521 594h1v1h-1zM521 596h1v1h-1zM521 598h1v1h-1zM521 600h1v1h-1zM521 602h1v1h-1zM521 604h1v1h-1zM521 606h1v1h-1zM521 608h1v1h-1zM521 610h1v1h-1zM521 612h1v1h-1zM521 614h1v1h-1zM521 615h1v1h-1zM521 616h1v1h-1zM521 618h1v1h-1zM521 620h1v1h-1zM521 622h1v1h-1zM521 624h1v1h-1zM521 626h1v1h-1zM521 628h1v1h-1zM521 630h1v1h-1zM521 632h1v1h-1zM521 634h1v1h-1zM521 636h1v1h-1zM521 638h1v1h-1zM521 640h1v1h-1zM521 641h1v1h-1zM521 642h1v1h-1zM521 644h1v1h-1zM521 646h1v1h-1zM521 648h1v1h-1zM521 650h1v1h-1zM521 652h1v1h-1zM521 654h1v1h-1zM521 656h1v1h-1zM521 658h1v1h-1zM521 660h1v1h-1zM521 662h1v1h-1zM521 664h1v1h-1zM521 666h1v1h-1zM522 30h1v1h-1zM522 43h1v1h-1zM522 56h1v1h-1zM522 69h1v1h-1zM522 95h1v1h-1zM522 108h1v1h-1zM522 121h1v1h-1zM522 134h1v1h-1zM522 160h1v1h-1zM522 173h1v1h-1zM522 186h1v1h-1zM522 199h1v1h-1zM522 225h1v1h-1zM522 238h1v1h-1zM522 251h1v1h-1zM522 264h1v1h-1zM522 290h1v1h-1zM522 303h1v1h-1zM522 316h1v1h-1zM522 329h1v1h-1zM522 355h1v1h-1zM522 368h1v1h-1zM522 381h1v1h-1zM522 394h1v1h-1zM522 420h1v1h-1zM522 433h1v1h-1zM522 446h1v1h-1zM522 459h1v1h-1zM522 485h1v1h-1zM522 498h1v1h-1zM522 511h1v1h-1zM522 524h1v1h-1zM522 550h1v1h-1zM522 563h1v1h-1zM522 576h1v1h-1zM522 589h1v1h-1zM522 615h1v1h-1zM522 628h1v1h-1zM522 641h1v1h-1zM522 654h1v1h-1zM523 82h1v1h-1zM523 147h1v1h-1zM523 212h1v1h-1zM523 277h1v1h-1zM523 342h1v1h-1zM523 407h1v1h-1zM523 472h1v1h-1zM523 537h1v1h-1zM523 602h1v1h-1zM524 30h1v1h-1zM524 43h1v1h-1zM524 56h1v1h-1zM524 69h1v1h-1zM524 95h1v1h-1zM524 108h1v1h-1zM524 121h1v1h-1zM524 134h1v1h-1zM524 160h1v1h-1zM524 173h1v1h-1zM524 186h1v1h-1zM524 199h1v1h-1zM524 225h1v1h-1zM524 238h1v1h-1zM524 251h1v1h-1zM524 264h1v1h-1zM524 290h1v1h-1zM524 303h1v1h-1zM524 316h1v1h-1zM524 329h1v1h-1zM524 355h1v1h-1zM524 368h1v1h-1zM524 381h1v1h-1zM524 394h1v1h-1zM524 420h1v1h-1zM524 433h1v1h-1zM524 446h1v1h-1zM524 459h1v1h-1zM524 485h1v1h-1zM524 498h1v1h-1zM524 511h1v1h-1zM524 524h1v1h-1zM524 550h1v1h-1zM524 563h1v1h-1zM524 576h1v1h-1zM524 589h1v1h-1zM524 615h1v1h-1zM524 628h1v1h-1zM524 641h1v1h-1zM524 654h1v1h-1zM525 82h1v1h-1zM525 147h1v1h-1zM525 212h1v1h-1zM525 277h1v1h-1zM525 342h1v1h-1zM525 407h1v1h-1zM525 472h1v1h-1zM525 537h1v1h-1zM525 602h1v1h-1zM527 82h1v1h-1zM527 147h1v1h-1zM527 212h1v1h-1zM527 277h1v1h-1zM527 342h1v1h-1zM527 407h1v1h-1zM527 472h1v1h-1zM527 537h1v1h-1zM527 602h1v1h-1zM529 342h1v1h-1zM531 342h1v1h-1zM533 342h1v1h-1zM535 342h1v1h-1zM537 342h1v1h-1zM539 342h1v1h-1zM541 17h1v1h-1zM541 19h1v1h-1zM541 82h1v1h-1zM541 147h1v1h-1zM541 212h1v1h-1zM541 277h1v1h-1zM541 339h1v1h-1zM541 341h1v1h-1zM541 342h1v1h-1zM541 343h1v1h-1zM541 345h1v1h-1zM541 407h1v1h-1zM541 472h1v1h-1zM541 537h1v1h-1zM541 602h1v1h-1zM541 665h1v1h-1zM541 667h1v1h-1zM543 342h1v1h-1zM545 342h1v1h-1zM547 342h1v1h-1zM549 342h1v1h-1zM551 342h1v1h-1zM553 342h1v1h-1zM555 342h1v1h-1zM557 342h1v1h-1zM559 342h1v1h-1zM561 17h1v1h-1zM561 19h1v1h-1zM561 82h1v1h-1zM561 147h1v1h-1zM561 212h1v1h-1zM561 277h1v1h-1zM561 339h1v1h-1zM561 341h1v1h-1zM561 342h1v1h-1zM561 343h1v1h-1zM561 345h1v1h-1zM561 407h1v1h-1zM561 472h1v1h-1zM561 537h1v1h-1zM561 602h1v1h-1zM561 665h1v1h-1zM561 667h1v1h-1zM563 342h1v1h-1zM565 342h1v1h-1zM567 342h1v1h-1zM569 342h1v1h-1zM571 342h1v1h-1zM573 342h1v1h-1zM575 342h1v1h-1zM577 342h1v1h-1zM579 342h1v1h-1zM581 17h1v1h-1zM581 19h1v1h-1zM581 82h1v1h-1zM581 147h1v1h-1zM581 212h1v1h-1zM581 277h1v1h-1zM581 339h1v1h-1zM581 341h1v1h-1zM581 342h1v1h-1zM581 343h1v1h-1zM581 345h1v1h-1zM581 407h1v1h-1zM581 472h1v1h-1zM581 537h1v1h-1zM581 602h1v1h-1zM581 665h1v1h-1zM581 667h1v1h-1zM583 342h1v1h-1zM585 342h1v1h-1zM587 342h1v1h-1zM589 342h1v1h-1zM591 342h1v1h-1zM593 342h1v1h-1zM595 342h1v1h-1zM597 342h1v1h-1zM599 342h1v1h-1zM601 17h1v1h-1zM601 19h1v1h-1zM601 82h1v1h-1zM601 147h1v1h-1zM601 212h1v1h-1zM601 277h1v1h-1zM601 339h1v1h-1zM601 341h1v1h-1zM601 342h1v1h-1zM601 343h1v1h-1zM601 345h1v1h-1zM601 407h1v1h-1zM601 472h1v1h-1zM601 537h1v1h-1zM601 602h1v1h-1zM601 665h1v1h-1zM601 667h1v1h-1zM603 342h1v1h-1zM605 342h1v1h-1zM607 342h1v1h-1zM609 342h1v1h-1zM611 342h1v1h-1zM613 342h1v1h-1zM615 342h1v1h-1zM617 342h1v1h-1zM619 342h1v1h-1zM621 18h1v1h-1zM621 20h1v1h-1zM621 22h1v1h-1zM621 30h1v1h-1zM621 43h1v1h-1zM621 56h1v1h-1zM621 69h1v1h-1zM621 82h1v1h-1zM621 95h1v1h-1zM621 108h1v1h-1zM621 121h1v1h-1zM621 134h1v1h-1zM621 147h1v1h-1zM621 160h1v1h-1zM621 173h1v1h-1zM621 186h1v1h-1zM621 199h1v1h-1zM621 212h1v1h-1zM621 225h1v1h-1zM621 238h1v1h-1zM621 251h1v1h-1zM621 264h1v1h-1zM621 277h1v1h-1zM621 290h1v1h-1zM621 303h1v1h-1zM621 316h1v1h-1zM621 329h1v1h-1zM621 336h1v1h-1zM621 338h1v1h-1zM621 340h1v1h-1zM621 342h1v1h-1zM621 344h1v1h-1zM621 346h1v1h-1zM621 348h1v1h-1zM621 355h1v1h-1zM621 368h1v1h-1zM621 381h1v1h-1zM621 394h1v1h-1zM621 407h1v1h-1zM621 420h1v1h-1zM621 433h1v1h-1zM621 446h1v1h-1zM621 459h1v1h-1zM621 472h1v1h-1zM621 485h1v1h-1zM621 498h1v1h-1zM621 511h1v1h-1zM621 524h1v1h-1zM621 537h1v1h-1zM621 550h1v1h-1zM621 563h1v1h-1zM621 576h1v1h-1zM621 589h1v1h-1zM621 602h1v1h-1zM621 615h1v1h-1zM621 628h1v1h-1zM621 641h1v1h-1zM621 654h1v1h-1zM621 662h1v1h-1zM621 664h1v1h-1zM621 666h1v1h-1zM623 342h1v1h-1zM625 342h1v1h-1zM627 342h1v1h-1zM629 342h1v1h-1zM631 342h1v1h-1zM633 342h1v1h-1zM635 342h1v1h-1zM637 342h1v1h-1zM639 342h1v1h-1zM641 17h1v1h-1zM641 19h1v1h-1zM641 82h1v1h-1zM641 147h1v1h-1zM641 212h1v1h-1zM641 277h1v1h-1zM641 339h1v1h-1zM641 341h1v1h-1zM641 342h1v1h-1zM641 343h1v1h-1zM641 345h1v1h-1zM641 407h1v1h-1zM641 472h1v1h-1zM641 537h1v1h-1zM641 602h1v1h-1zM641 665h1v1h-1zM641 667h1v1h-1zM643 342h1v1h-1zM645 342h1v1h-1zM647 342h1v1h-1zM649 342h1v1h-1zM651 342h1v1h-1zM653 342h1v1h-1zM655 342h1v1h-1zM657 342h1v1h-1zM659 342h1v1h-1zM661 17h1v1h-1zM661 19h1v1h-1zM661 82h1v1h-1zM661 147h1v1h-1zM661 212h1v1h-1zM661 277h1v1h-1zM661 339h1v1h-1zM661 341h1v1h-1zM661 342h1v1h-1zM661 343h1v1h-1zM661 345h1v1h-1zM661 407h1v1h-1zM661 472h1v1h-1zM661 537h1v1h-1zM661 602h1v1h-1zM661 665h1v1h-1zM661 667h1v1h-1zM663 342h1v1h-1zM665 342h1v1h-1zM667 342h1v1h-1zM669 342h1v1h-1zM671 342h1v1h-1zM673 342h1v1h-1zM675 342h1v1h-1zM677 342h1v1h-1zM679 342h1v1h-1zM681 17h1v1h-1zM681 19h1v1h-1zM681 82h1v1h-1zM681 147h1v1h-1zM681 212h1v1h-1zM681 277h1v1h-1zM681 339h1v1h-1zM681 341h1v1h-1zM681 342h1v1h-1zM681 343h1v1h-1zM681 345h1v1h-1zM681 407h1v1h-1zM681 472h1v1h-1zM681 537h1v1h-1zM681 602h1v1h-1zM681 665h1v1h-1zM681 667h1v1h-1zM683 342h1v1h-1zM685 342h1v1h-1zM687 342h1v1h-1zM689 342h1v1h-1zM691 342h1v1h-1zM693 342h1v1h-1zM695 342h1v1h-1zM697 342h1v1h-1zM699 342h1v1h-1zM701 17h1v1h-1zM701 19h1v1h-1zM701 82h1v1h-1zM701 147h1v1h-1zM701 212h1v1h-1zM701 277h1v1h-1zM701 339h1v1h-1zM701 341h1v1h-1zM701 342h1v1h-1zM701 343h1v1h-1zM701 345h1v1h-1zM701 407h1v1h-1zM701 472h1v1h-1zM701 537h1v1h-1zM701 602h1v1h-1zM701 665h1v1h-1zM701 667h1v1h-1zM703 342h1v1h-1zM705 342h1v1h-1zM707 342h1v1h-1zM709 342h1v1h-1zM711 342h1v1h-1zM713 342h1v1h-1zM715 342h1v1h-1zM717 342h1v1h-1zM719 342h1v1h-1zM721 18h1v1h-1zM721 20h1v1h-1zM721 22h1v1h-1zM721 30h1v1h-1zM721 43h1v1h-1zM721 56h1v1h-1zM721 69h1v1h-1zM721 82h1v1h-1zM721 95h1v1h-1zM721 108h1v1h-1zM721 121h1v1h-1zM721 134h1v1h-1zM721 147h1v1h-1zM721 160h1v1h-1zM721 173h1v1h-1zM721 186h1v1h-1zM721 199h1v1h-1zM721 212h1v1h-1zM721 225h1v1h-1zM721 238h1v1h-1zM721 251h1v1h-1zM721 264h1v1h-1zM721 277h1v1h-1zM721 290h1v1h-1zM721 303h1v1h-1zM721 316h1v1h-1zM721 329h1v1h-1zM721 336h1v1h-1zM721 338h1v1h-1zM721 340h1v1h-1zM721 342h1v1h-1zM721 344h1v1h-1zM721 346h1v1h-1zM721 348h1v1h-1zM721 355h1v1h-1zM721 368h1v1h-1zM721 381h1v1h-1zM721 394h1v1h-1zM721 407h1v1h-1zM721 420h1v1h-1zM721 433h1v1h-1zM721 446h1v1h-1zM721 459h1v1h-1zM721 472h1v1h-1zM721 485h1v1h-1zM721 498h1v1h-1zM721 511h1v1h-1zM721 524h1v1h-1zM721 537h1v1h-1zM721 550h1v1h-1zM721 563h1v1h-1zM721 576h1v1h-1zM721 589h1v1h-1zM721 602h1v1h-1zM721 615h1v1h-1zM721 628h1v1h-1zM721 641h1v1h-1zM721 654h1v1h-1zM721 662h1v1h-1zM721 664h1v1h-1zM721 666h1v1h-1zM723 342h1v1h-1zM725 342h1v1h-1zM727 342h1v1h-1zM729 342h1v1h-1zM731 342h1v1h-1zM733 342h1v1h-1zM735 342h1v1h-1zM737 342h1v1h-1zM739 342h1v1h-1zM741 17h1v1h-1zM741 19h1v1h-1zM741 82h1v1h-1zM741 147h1v1h-1zM741 212h1v1h-1zM741 277h1v1h-1zM741 339h1v1h-1zM741 341h1v1h-1zM741 342h1v1h-1zM741 343h1v1h-1zM741 345h1v1h-1zM741 407h1v1h-1zM741 472h1v1h-1zM741 537h1v1h-1zM741 602h1v1h-1zM741 665h1v1h-1zM741 667h1v1h-1zM743 342h1v1h-1zM745 342h1v1h-1zM747 342h1v1h-1zM749 342h1v1h-1zM751 342h1v1h-1zM753 342h1v1h-1zM755 342h1v1h-1zM757 342h1v1h-1zM759 342h1v1h-1zM761 17h1v1h-1zM761 19h1v1h-1zM761 82h1v1h-1zM761 147h1v1h-1zM761 212h1v1h-1zM761 277h1v1h-1zM761 339h1v1h-1zM761 341h1v1h-1zM761 342h1v1h-1zM761 343h1v1h-1zM761 345h1v1h-1zM761 407h1v1h-1zM761 472h1v1h-1zM761 537h1v1h-1zM761 602h1v1h-1zM761 665h1v1h-1zM761 667h1v1h-1zM763 342h1v1h-1zM765 342h1v1h-1zM767 342h1v1h-1zM769 342h1v1h-1zM771 342h1v1h-1zM773 342h1v1h-1zM775 342h1v1h-1zM777 342h1v1h-1zM779 342h1v1h-1zM781 17h1v1h-1zM781 19h1v1h-1zM781 82h1v1h-1zM781 147h1v1h-1zM781 212h1v1h-1zM781 277h1v1h-1zM781 339h1v1h-1zM781 341h1v1h-1zM781 342h1v1h-1zM781 343h1v1h-1zM781 345h1v1h-1zM781 407h1v1h-1zM781 472h1v1h-1zM781 537h1v1h-1zM781 602h1v1h-1zM781 665h1v1h-1zM781 667h1v1h-1zM783 342h1v1h-1zM785 342h1v1h-1zM787 342h1v1h-1zM789 342h1v1h-1zM791 342h1v1h-1zM793 342h1v1h-1zM795 342h1v1h-1zM797 342h1v1h-1zM799 342h1v1h-1zM801 17h1v1h-1zM801 19h1v1h-1zM801 82h1v1h-1zM801 147h1v1h-1zM801 212h1v1h-1zM801 277h1v1h-1zM801 339h1v1h-1zM801 341h1v1h-1zM801 342h1v1h-1zM801 343h1v1h-1zM801 345h1v1h-1zM801 407h1v1h-1zM801 472h1v1h-1zM801 537h1v1h-1zM801 602h1v1h-1zM801 665h1v1h-1zM801 667h1v1h-1zM803 342h1v1h-1zM805 342h1v1h-1zM807 342h1v1h-1zM809 342h1v1h-1zM811 342h1v1h-1zM813 342h1v1h-1zM815 342h1v1h-1zM817 342h1v1h-1zM819 342h1v1h-1zM821 18h1v1h-1zM821 20h1v1h-1zM821 22h1v1h-1zM821 30h1v1h-1zM821 43h1v1h-1zM821 56h1v1h-1zM821 69h1v1h-1zM821 82h1v1h-1zM821 95h1v1h-1zM821 108h1v1h-1zM821 121h1v1h-1zM821 134h1v1h-1zM821 147h1v1h-1zM821 160h1v1h-1zM821 173h1v1h-1zM821 186h1v1h-1zM821 199h1v1h-1zM821 212h1v1h-1zM821 225h1v1h-1zM821 238h1v1h-1zM821 251h1v1h-1zM821 264h1v1h-1zM821 277h1v1h-1zM821 290h1v1h-1zM821 303h1v1h-1zM821 316h1v1h-1zM821 329h1v1h-1zM821 336h1v1h-1zM821 338h1v1h-1zM821 340h1v1h-1zM821 342h1v1h-1zM821 344h1v1h-1zM821 346h1v1h-1zM821 348h1v1h-1zM821 355h1v1h-1zM821 368h1v1h-1zM821 381h1v1h-1zM821 394h1v1h-1zM821 407h1v1h-1zM821 420h1v1h-1zM821 433h1v1h-1zM821 446h1v1h-1zM821 459h1v1h-1zM821 472h1v1h-1zM821 485h1v1h-1zM821 498h1v1h-1zM821 511h1v1h-1zM821 524h1v1h-1zM821 537h1v1h-1zM821 550h1v1h-1zM821 563h1v1h-1zM821 576h1v1h-1zM821 589h1v1h-1zM821 602h1v1h-1zM821 615h1v1h-1zM821 628h1v1h-1zM821 641h1v1h-1zM821 654h1v1h-1zM821 662h1v1h-1zM821 664h1v1h-1zM821 666h1v1h-1zM823 342h1v1h-1zM825 342h1v1h-1zM827 342h1v1h-1zM829 342h1v1h-1zM831 342h1v1h-1zM833 342h1v1h-1zM835 342h1v1h-1zM837 342h1v1h-1zM839 342h1v1h-1zM841 17h1v1h-1zM841 19h1v1h-1zM841 82h1v1h-1zM841 147h1v1h-1zM841 212h1v1h-1zM841 277h1v1h-1zM841 339h1v1h-1zM841 341h1v1h-1zM841 342h1v1h-1zM841 343h1v1h-1zM841 345h1v1h-1zM841 407h1v1h-1zM841 472h1v1h-1zM841 537h1v1h-1zM841 602h1v1h-1zM841 665h1v1h-1zM841 667h1v1h-1zM843 342h1v1h-1zM845 342h1v1h-1zM847 342h1v1h-1zM849 342h1v1h-1zM851 342h1v1h-1zM853 342h1v1h-1zM855 342h1v1h-1zM857 342h1v1h-1zM859 342h1v1h-1zM861 17h1v1h-1zM861 19h1v1h-1zM861 82h1v1h-1zM861 147h1v1h-1zM861 212h1v1h-1zM861 277h1v1h-1zM861 339h1v1h-1zM861 341h1v1h-1zM861 342h1v1h-1zM861 343h1v1h-1zM861 345h1v1h-1zM861 407h1v1h-1zM861 472h1v1h-1zM861 537h1v1h-1zM861 602h1v1h-1zM861 665h1v1h-1zM861 667h1v1h-1zM863 342h1v1h-1zM865 342h1v1h-1zM867 342h1v1h-1zM869 342h1v1h-1zM871 342h1v1h-1zM873 342h1v1h-1zM875 342h1v1h-1zM877 342h1v1h-1zM879 342h1v1h-1zM881 17h1v1h-1zM881 19h1v1h-1zM881 82h1v1h-1zM881 147h1v1h-1zM881 212h1v1h-1zM881 277h1v1h-1zM881 339h1v1h-1zM881 341h1v1h-1zM881 342h1v1h-1zM881 343h1v1h-1zM881 345h1v1h-1zM881 407h1v1h-1zM881 472h1v1h-1zM881 537h1v1h-1zM881 602h1v1h-1zM881 665h1v1h-1zM881 667h1v1h-1zM883 342h1v1h-1zM885 342h1v1h-1zM887 342h1v1h-1zM889 342h1v1h-1zM891 342h1v1h-1zM893 342h1v1h-1zM895 342h1v1h-1zM897 342h1v1h-1zM899 342h1v1h-1zM901 17h1v1h-1zM901 19h1v1h-1zM901 82h1v1h-1zM901 147h1v1h-1zM901 212h1v1h-1zM901 277h1v1h-1zM901 339h1v1h-1zM901 341h1v1h-1zM901 342h1v1h-1zM901 343h1v1h-1zM901 345h1v1h-1zM901 407h1v1h-1zM901 472h1v1h-1zM901 537h1v1h-1zM901 602h1v1h-1zM901 665h1v1h-1zM901 667h1v1h-1zM903 342h1v1h-1zM905 342h1v1h-1zM907 342h1v1h-1zM909 342h1v1h-1zM911 342h1v1h-1zM913 342h1v1h-1zM915 342h1v1h-1zM917 342h1v1h-1zM919 342h1v1h-1zM921 18h1v1h-1zM921 20h1v1h-1zM921 22h1v1h-1zM921 30h1v1h-1zM921 43h1v1h-1zM921 56h1v1h-1zM921 69h1v1h-1zM921 82h1v1h-1zM921 95h1v1h-1zM921 108h1v1h-1zM921 121h1v1h-1zM921 134h1v1h-1zM921 147h1v1h-1zM921 160h1v1h-1zM921 173h1v1h-1zM921 186h1v1h-1zM921 199h1v1h-1zM921 212h1v1h-1zM921 225h1v1h-1zM921 238h1v1h-1zM921 251h1v1h-1zM921 264h1v1h-1zM921 277h1v1h-1zM921 290h1v1h-1zM921 303h1v1h-1zM921 316h1v1h-1zM921 329h1v1h-1zM921 336h1v1h-1zM921 338h1v1h-1zM921 340h1v1h-1zM921 342h1v1h-1zM921 344h1v1h-1zM921 346h1v1h-1zM921 348h1v1h-1zM921 355h1v1h-1zM921 368h1v1h-1zM921 381h1v1h-1zM921 394h1v1h-1zM921 407h1v1h-1zM921 420h1v1h-1zM921 433h1v1h-1zM921 446h1v1h-1zM921 459h1v1h-1zM921 472h1v1h-1zM921 485h1v1h-1zM921 498h1v1h-1zM921 511h1v1h-1zM921 524h1v1h-1zM921 537h1v1h-1zM921 550h1v1h-1zM921 563h1v1h-1zM921 576h1v1h-1zM921 589h1v1h-1zM921 602h1v1h-1zM921 615h1v1h-1zM921 628h1v1h-1zM921 641h1v1h-1zM921 654h1v1h-1zM921 662h1v1h-1zM921 664h1v1h-1zM921 666h1v1h-1zM923 342h1v1h-1zM925 342h1v1h-1zM927 342h1v1h-1zM929 342h1v1h-1zM931 342h1v1h-1zM933 342h1v1h-1zM935 342h1v1h-1zM937 342h1v1h-1zM939 342h1v1h-1zM941 17h1v1h-1zM941 19h1v1h-1zM941 82h1v1h-1zM941 147h1v1h-1zM941 212h1v1h-1zM941 277h1v1h-1zM941 339h1v1h-1zM941 341h1v1h-1zM941 342h1v1h-1zM941 343h1v1h-1zM941 345h1v1h-1zM941 407h1v1h-1zM941 472h1v1h-1zM941 537h1v1h-1zM941 602h1v1h-1zM941 665h1v1h-1zM941 667h1v1h-1zM943 342h1v1h-1zM945 342h1v1h-1zM947 342h1v1h-1zM949 342h1v1h-1zM951 342h1v1h-1zM953 342h1v1h-1zM955 342h1v1h-1zM957 342h1v1h-1zM959 342h1v1h-1zM961 17h1v1h-1zM961 19h1v1h-1zM961 82h1v1h-1zM961 147h1v1h-1zM961 212h1v1h-1zM961 277h1v1h-1zM961 339h1v1h-1zM961 341h1v1h-1zM961 342h1v1h-1zM961 343h1v1h-1zM961 345h1v1h-1zM961 407h1v1h-1zM961 472h1v1h-1zM961 537h1v1h-1zM961 602h1v1h-1zM961 665h1v1h-1zM961 667h1v1h-1zM963 342h1v1h-1zM965 342h1v1h-1zM967 342h1v1h-1zM969 342h1v1h-1zM971 342h1v1h-1zM973 342h1v1h-1zM975 342h1v1h-1zM977 342h1v1h-1zM979 342h1v1h-1zM981 17h1v1h-1zM981 19h1v1h-1zM981 82h1v1h-1zM981 147h1v1h-1zM981 212h1v1h-1zM981 277h1v1h-1zM981 339h1v1h-1zM981 341h1v1h-1zM981 342h1v1h-1zM981 343h1v1h-1zM981 345h1v1h-1zM981 407h1v1h-1zM981 472h1v1h-1zM981 537h1v1h-1zM981 602h1v1h-1zM981 665h1v1h-1zM981 667h1v1h-1zM983 342h1v1h-1zM985 342h1v1h-1zM987 342h1v1h-1zM989 342h1v1h-1zM991 342h1v1h-1zM993 342h1v1h-1zM995 342h1v1h-1zM997 342h1v1h-1zM999 342h1v1h-1zM1001 17h1v1h-1zM1001 19h1v1h-1zM1001 82h1v1h-1zM1001 147h1v1h-1zM1001 212h1v1h-1zM1001 277h1v1h-1zM1001 339h1v1h-1zM1001 341h1v1h-1zM1001 342h1v1h-1zM1001 343h1v1h-1zM1001 345h1v1h-1zM1001 407h1v1h-1zM1001 472h1v1h-1zM1001 537h1v1h-1zM1001 602h1v1h-1zM1001 665h1v1h-1zM1001 667h1v1h-1zM1003 342h1v1h-1zM1005 342h1v1h-1zM1007 342h1v1h-1zM1009 342h1v1h-1zM1011 342h1v1h-1zM1013 342h1v1h-1zM1015 82h1v1h-1zM1015 147h1v1h-1zM1015 212h1v1h-1zM1015 277h1v1h-1zM1015 342h1v1h-1zM1015 407h1v1h-1zM1015 472h1v1h-1zM1015 537h1v1h-1zM1015 602h1v1h-1zM1017 82h1v1h-1zM1017 147h1v1h-1zM1017 212h1v1h-1zM1017 277h1v1h-1zM1017 342h1v1h-1zM1017 407h1v1h-1zM1017 472h1v1h-1zM1017 537h1v1h-1zM1017 602h1v1h-1zM1018 30h1v1h-1zM1018 43h1v1h-1zM1018 56h1v1h-1zM1018 69h1v1h-1zM1018 95h1v1h-1zM1018 108h1v1h-1zM1018 121h1v1h-1zM1018 134h1v1h-1zM1018 160h1v1h-1zM1018 173h1v1h-1zM1018 186h1v1h-1zM1018 199h1v1h-1zM1018 225h1v1h-1zM1018 238h1v1h-1zM1018 251h1v1h-1zM1018 264h1v1h-1zM1018 290h1v1h-1zM1018 303h1v1h-1zM1018 316h1v1h-1zM1018 329h1v1h-1zM1018 355h1v1h-1zM1018 368h1v1h-1zM1018 381h1v1h-1zM1018 394h1v1h-1zM1018 420h1v1h-1zM1018 433h1v1h-1zM1018 446h1v1h-1zM1018 459h1v1h-1zM1018 485h1v1h-1zM1018 498h1v1h-1zM1018 511h1v1h-1zM1018 524h1v1h-1zM1018 550h1v1h-1zM1018 563h1v1h-1zM1018 576h1v1h-1zM1018 589h1v1h-1zM1018 615h1v1h-1zM1018 628h1v1h-1zM1018 641h1v1h-1zM1018 654h1v1h-1zM1019 82h1v1h-1zM1019 147h1v1h-1zM1019 212h1v1h-1zM1019 277h1v1h-1zM1019 342h1v1h-1zM1019 407h1v1h-1zM1019 472h1v1h-1zM1019 537h1v1h-1zM1019 602h1v1h-1zM1020 30h1v1h-1zM1020 43h1v1h-1zM1020 56h1v1h-1zM1020 69h1v1h-1zM1020 95h1v1h-1zM1020 108h1v1h-1zM1020 121h1v1h-1zM1020 134h1v1h-1zM1020 160h1v1h-1zM1020 173h1v1h-1zM1020 186h1v1h-1zM1020 199h1v1h-1zM1020 225h1v1h-1zM1020 238h1v1h-1zM1020 251h1v1h-1zM1020 264h1v1h-1zM1020 290h1v1h-1zM1020 303h1v1h-1zM1020 316h1v1h-1zM1020 329h1v1h-1zM1020 355h1v1h-1zM1020 368h1v1h-1zM1020 381h1v1h-1zM1020 394h1v1h-1zM1020 420h1v1h-1zM1020 433h1v1h-1zM1020 446h1v1h-1zM1020 459h1v1h-1zM1020 485h1v1h-1zM1020 498h1v1h-1zM1020 511h1v1h-1zM1020 524h1v1h-1zM1020 550h1v1h-1zM1020 563h1v1h-1zM1020 576h1v1h-1zM1020 589h1v1h-1zM1020 615h1v1h-1zM1020 628h1v1h-1zM1020 641h1v1h-1zM1020 654h1v1h-1z" fill="#a49a7a" shape-rendering="crispEdges"/>
<path d="M517.5 1h8l-4 3.5z" fill="#ff9a00"/><rect x="515" y="5" width="8" height="11" rx="1" fill="#ff9a00"/><path d="M516.5 6.5h5v1.5h-1.5v6.5h-2v-6.5h-1.5z" fill="#000"/><rect x="521" y="1" width="2" height="14" fill="#9a9aa8"/><path d="M515.5 17h11.5l-5.75 6z" fill="#ff9a00"/><path d="M21 30.5L27 24H37L38 25V36L37 37H27Z" fill="#ff9a00"/><path d="M27 25.3h10v1.8h-4v8.8h-2v-8.8h-4z" fill="#000"/><path d="M1010 306.5l6-5.5v11z" fill="#00e6e6"/><rect x="1016" y="306" width="5" height="1" fill="#00e6e6"/><rect x="0.5" y="319.5" width="12.5" height="14" rx="2.5" fill="#000" stroke="#d4d0cc"/><text x="7.3" y="331.5" font-size="14" fill="#d4d0cc" text-anchor="middle">0</text><path d="M20 314.5H15Q13.5 314.5 13.5 316V337Q13.5 338.5 15 338.5H20L16.8 335V318Z" fill="#000" stroke="#d4d0cc" stroke-width="1"/><path d="M0 530.2h12.5l7.5 8" fill="none" stroke="#e8e800" stroke-width="1.5"/><path d="M0 531.5h12.5l7.5 8" fill="none" stroke="#000" stroke-width="1"/><path d="M0 532h12l8 8l-8 8h-12z" fill="#00e6e6"/><path d="M0 548.5h12l8-8" fill="none" stroke="#000" stroke-width="1"/><text x="7.5" y="545.5" font-size="14" font-weight="bold" fill="#000" text-anchor="middle">2</text>
<text transform="translate(237.8 258.4) scale(0.78 1)" x="0" y="0" font-size="22.5" letter-spacing="2.3" fill="#f2f2f2" stroke="#f2f2f2" stroke-width="0.15">HS_Gate</text>
<text transform="translate(838.8 252.2) scale(0.78 1)" x="0" y="0" font-size="22.5" letter-spacing="2.3" fill="#f2f2f2" stroke="#f2f2f2" stroke-width="0.15">LS_Gate</text>
<rect x="20.5" y="670.5" width="554" height="20" rx="7" ry="7" fill="#000200" stroke="#e4e0dc" stroke-width="1" shape-rendering="crispEdges"/><rect x="26" y="673" width="25" height="16" rx="8" ry="8" fill="#ffff00"/><path d="M38 675h2v11h-2zM36 676h2v2h-2z" fill="#000"/><text x="68.58" y="686" font-size="15.6" fill="#ffff00" letter-spacing="0.856">1.00 V</text><rect x="165" y="673" width="25" height="16" rx="8.0" ry="8.0" fill="#00e6e6"/><text x="177.5" y="685.8" font-size="15.5" font-weight="bold" fill="#000" text-anchor="middle">2</text><text x="207.68" y="686" font-size="15.6" fill="#00e6e6" letter-spacing="0.856">1.00 V</text><rect x="582.5" y="670.5" width="147" height="37" rx="7" ry="7" fill="#000200" stroke="#e4e0dc" stroke-width="1" shape-rendering="crispEdges"/><text x="588.08" y="686" font-size="15.6" fill="#f4f4f4" letter-spacing="1.374">20.0ns</text><path d="M588 691H598L599 692V703L598 704H588L587 703V692Z" fill="#ff9a00"/><path d="M588 692h9.7v2h-3.4v9h-2.7v-9h-3.6z" fill="#000"/><rect x="600" y="696.8" width="6" height="1.3" fill="#ff9a00"/><path d="M605 694L609 697.5L605 701Z" fill="#ff9a00"/><path d="M610 693.8H621L615.5 700Z" fill="#ff9a00"/><text x="623.38" y="703" font-size="15.6" fill="#ff9a00" letter-spacing="1.226">10.0000µs</text><rect x="737.5" y="670.5" width="106" height="37" rx="7" ry="7" fill="#000200" stroke="#e4e0dc" stroke-width="1" shape-rendering="crispEdges"/><text x="743.09" y="686" font-size="15.6" fill="#f4f4f4" letter-spacing="0.915">5.00GS/s</text><text x="743.18" y="703" font-size="15.6" fill="#f4f4f4" letter-spacing="1.582">10M points</text><rect x="851.5" y="670.5" width="170" height="37" rx="7" ry="7" fill="#000200" stroke="#e4e0dc" stroke-width="1" shape-rendering="crispEdges"/><rect x="882" y="673" width="25" height="16" rx="8.0" ry="8.0" fill="#00e6e6"/><text x="894.5" y="685.8" font-size="15.5" font-weight="bold" fill="#000" text-anchor="middle">2</text><path d="M920 676.5h5l3 8h4.5" fill="none" stroke="#f4f4f4" stroke-width="1.5"/><text x="965.18" y="686" font-size="15.6" fill="#f4f4f4" letter-spacing="0.982">3.60 V</text><rect x="582.5" y="710.5" width="261" height="36" rx="7" ry="7" fill="#000200" stroke="#e4e0dc" stroke-width="1" shape-rendering="crispEdges"/><text x="587.61" y="726" font-size="15.6" fill="#f4f4f4" letter-spacing="1.298">D15−D0</text><rect x="593" y="734" width="4" height="8" fill="#3c3c3c"/><rect x="598" y="734" width="4" height="8" fill="#3c3c3c"/><rect x="597" y="733" width="1" height="10" fill="#c8b8b8"/><path d="M587 738h3l-1.5-3l5 3.5l-5 3.5l1.5-3h-3z" fill="#d8d8d8"/><path d="M607 738h-3l1.5-3l-5 3.5l5 3.5l-1.5-3h3z" fill="#d8d8d8"/><rect x="597" y="732" width="11" height="1.5" fill="#00ff00"/><rect x="587" y="742.2" width="11" height="1.8" fill="#1020ff"/><text x="612.87" y="743" font-size="15.6" fill="#f4f4f4" letter-spacing="1.362">Timing Resolution: 2.00ns</text><rect x="909.5" y="729.5" width="112" height="36" rx="7" ry="7" fill="#000200" stroke="#e4e0dc" stroke-width="1" shape-rendering="crispEdges"/><text x="924.98" y="746" font-size="15.6" fill="#f4f4f4" letter-spacing="1.845">1 Apr 2025</text><text x="915.48" y="762" font-size="15.6" fill="#f4f4f4" letter-spacing="1.519">11:25:28</text>
</svg>
</body></html>
